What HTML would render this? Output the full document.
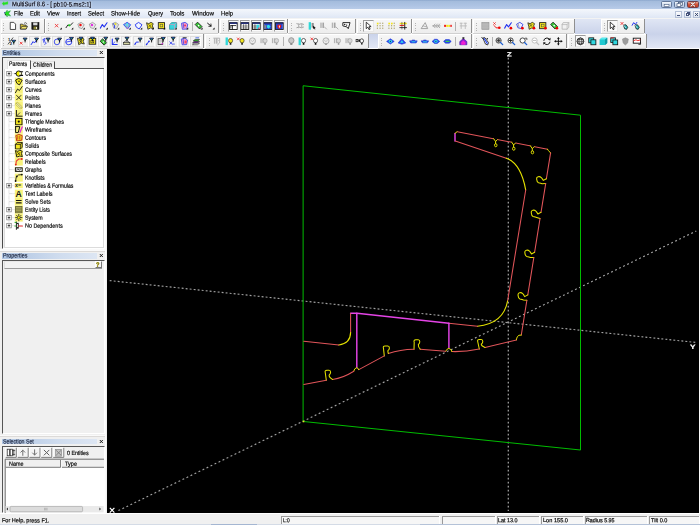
<!DOCTYPE html><html><head><meta charset="utf-8"><title>MultiSurf 8.6 - [ pb10-5.ms2:1]</title><style>
html,body{margin:0;padding:0;background:#f0f0f0;overflow:hidden}
body{width:700px;height:525px;position:relative;font-family:"Liberation Sans",sans-serif;font-size:6px;color:#000;line-height:1}
.a{position:absolute}
.t{position:absolute;white-space:nowrap;transform-origin:0 0;transform:scaleX(.87);line-height:1;-webkit-text-stroke:.75px currentColor}
#title{left:0;top:0;width:700px;height:9px;background:linear-gradient(#8aa6cc 0,#a4bcdc 14%,#adc3e3 60%,#b8cce8 100%)}
#menu{left:0;top:9px;width:700px;height:9px;background:linear-gradient(#f4f7fc,#dfe7f5)}
#rebar{left:0;top:18px;width:700px;height:31px;background:#f3f3f3}
.blu{position:absolute;background:linear-gradient(#e0e6f4,#cad3ea)}
.blu2{position:absolute;background:linear-gradient(#cad3ea,#e2e7f5)}
.tb{position:absolute;height:13px;background:linear-gradient(#f6f6f6,#ededed);border:solid #fff;border-width:1px 0 0 1px;box-shadow:1px 0 0 #8f8f8f,0 1px 0 #d0d0d0}
.grip{position:absolute;top:3px;left:2px;width:1px;height:8px;background:repeating-linear-gradient(#b4b4b4 0,#b4b4b4 1px,transparent 1px,transparent 2.5px)}
.pb{position:absolute;background:#fafafa;border:1px solid #9c9c9c;border-right-color:#e8e8e8;border-bottom-color:#e8e8e8;box-sizing:border-box}
.sep{position:absolute;width:1px;background:#b2b2b2}
#left{left:0;top:49px;width:107px;height:464px;background:#f0f0f0}
.hdr{position:absolute;left:2px;width:95px;height:5.9px;background:linear-gradient(90deg,#aec4e2,#cfdcee 60%,#dde6f3)}
.hx{position:absolute;left:99px;width:6px;height:6px}
#view{left:107px;top:48.8px;width:591.5px;height:464.3px;background:#000}
#status{left:0;top:513px;width:700px;height:12px;background:#f0f0f0;border-top:1.4px solid #fff;box-sizing:border-box}
.pane{position:absolute;height:7.6px;border-left:1px solid #9a9a9a;border-top:1px solid #9a9a9a;background:#f6f6f6;box-sizing:border-box;box-shadow:1px 0 0 #fff}
</style></head><body>
<div id="title" class="a"></div>
<div class="a" style="left:661px;top:1px;width:11px;height:7px;border-radius:1.6px;background:linear-gradient(#f2f6fb,#d3deee 50%,#bccbe2);border:.8px solid #62779a;box-sizing:border-box"></div>
<div class="a" style="left:674px;top:1px;width:11px;height:7px;border-radius:1.6px;background:linear-gradient(#f2f6fb,#d3deee 50%,#bccbe2);border:.8px solid #62779a;box-sizing:border-box"></div>
<div class="a" style="left:687px;top:1px;width:11.5px;height:7px;border-radius:1.6px;background:linear-gradient(#eaa896,#d4583e 45%,#bf3a22);border:.8px solid #70404a;box-sizing:border-box"></div>
<svg class="a" style="left:660px;top:0" width="40" height="9" viewBox="0 0 40 9"><rect x="4.2" y="4.6" width="4.8" height="1.7" fill="#fff" stroke="#4b5f80" stroke-width=".6"/><rect x="18.6" y="2.5" width="3.8" height="2.8" fill="#fff" stroke="#44587a" stroke-width=".7"/><rect x="17" y="3.7" width="3.8" height="2.8" fill="#fff" stroke="#44587a" stroke-width=".7"/><path d="M30.9,2.7L34.6,6.2M34.6,2.7L30.9,6.2" stroke="#7a2a20" stroke-width="1.9" stroke-linecap="round"/><path d="M30.9,2.7L34.6,6.2M34.6,2.7L30.9,6.2" stroke="#fff" stroke-width="1.1" stroke-linecap="round"/></svg>
<div id="menu" class="a"></div>
<div class="a" style="left:675px;top:10.5px;width:7px;height:7px;background:linear-gradient(#fdfdfe,#dfe6f2);border:.6px solid #b4c0d6;box-sizing:border-box"></div>
<div class="a" style="left:684px;top:10.5px;width:7px;height:7px;background:linear-gradient(#fdfdfe,#dfe6f2);border:.6px solid #b4c0d6;box-sizing:border-box"></div>
<div class="a" style="left:693px;top:10.5px;width:7px;height:7px;background:linear-gradient(#fdfdfe,#dfe6f2);border:.6px solid #b4c0d6;box-sizing:border-box"></div>
<div class="a" style="left:677px;top:15px;width:3px;height:1px;background:#44527a"></div>
<div class="a" style="left:686.5px;top:12.3px;width:3px;height:2.6px;border:.6px solid #44527a;box-sizing:border-box"></div>
<div class="a" style="left:685.7px;top:13.4px;width:3px;height:2.6px;border:.6px solid #44527a;background:#f4f6fa;box-sizing:border-box"></div>
<svg class="a" style="left:693px;top:10.5px" width="7" height="7"><path d="M2.1,2L5,5M5,2L2.1,5" stroke="#34436a" stroke-width=".95"/></svg>
<div id="rebar" class="a"></div>
<div class="blu" style="left:575px;top:19px;width:25.5px;height:14.5px"></div>
<div class="blu" style="left:645px;top:19px;width:55px;height:15px"></div>
<div class="blu2" style="left:369px;top:34px;width:8.5px;height:13.799999999999997px"></div>
<div class="blu2" style="left:647px;top:34px;width:53px;height:13.799999999999997px"></div>
<div class="a" style="left:0;top:47.8px;width:700px;height:1.2px;background:#fbfbfc"></div>
<div class="tb" style="left:1px;top:19px;width:41.5px"><div class="grip" style="left:0.5px"></div></div>
<div class="tb" style="left:45px;top:19px;width:172px"><div class="grip" style="left:2px"></div></div>
<div class="tb" style="left:220px;top:19px;width:66px"><div class="grip" style="left:2px"></div></div>
<div class="tb" style="left:288px;top:19px;width:66px"><div class="grip" style="left:2px"></div></div>
<div class="tb" style="left:357px;top:19px;width:53px"><div class="grip" style="left:2px"></div></div>
<div class="tb" style="left:412px;top:19px;width:58px"><div class="grip" style="left:2px"></div></div>
<div class="tb" style="left:473px;top:19px;width:100px"><div class="grip" style="left:2px"></div></div>
<div class="tb" style="left:601px;top:19px;width:42px"><div class="grip" style="left:1.5px"></div></div>
<div class="tb" style="left:1px;top:34px;width:201px"><div class="grip" style="left:0.5px"></div></div>
<div class="tb" style="left:205px;top:34px;width:162px"><div class="grip" style="left:2.5px"></div></div>
<div class="tb" style="left:378px;top:34px;width:92px"><div class="grip" style="left:2px"></div></div>
<div class="tb" style="left:473px;top:34px;width:92px"><div class="grip" style="left:2px"></div></div>
<div class="tb" style="left:568px;top:34px;width:77px"><div class="grip" style="left:1.5px"></div></div>
<div class="sep" style="left:191.5px;top:21.5px;height:9px"></div>
<div class="sep" style="left:455px;top:21.5px;height:9px"></div>
<div class="sep" style="left:283px;top:36.5px;height:9px"></div>
<div class="sep" style="left:455px;top:36.5px;height:9px"></div>
<div class="sep" style="left:492px;top:36.5px;height:9px"></div>
<div class="pb" style="left:228px;top:20px;width:10.5px;height:12px"></div>
<div class="pb" style="left:239.5px;top:20px;width:10.5px;height:12px"></div>
<div class="pb" style="left:251px;top:20px;width:10.5px;height:12px"></div>
<div class="pb" style="left:262.5px;top:20px;width:10.5px;height:12px"></div>
<div class="pb" style="left:274px;top:20px;width:10.5px;height:12px"></div>
<div class="pb" style="left:363px;top:20px;width:11px;height:12px"></div>
<div class="pb" style="left:607px;top:20px;width:11px;height:12px"></div>
<div class="pb" style="left:575px;top:35px;width:11px;height:12px"></div>
<div class="a" style="left:17.7px;top:35.5px;width:11px;height:11px;border:1px solid #dcdcdc;border-right-color:#fff;box-sizing:border-box;opacity:.9"></div>
<div class="a" style="left:29.2px;top:35.5px;width:11px;height:11px;border:1px solid #dcdcdc;border-right-color:#fff;box-sizing:border-box;opacity:.9"></div>
<div class="a" style="left:40.7px;top:35.5px;width:11px;height:11px;border:1px solid #dcdcdc;border-right-color:#fff;box-sizing:border-box;opacity:.9"></div>
<div class="a" style="left:52.2px;top:35.5px;width:11px;height:11px;border:1px solid #dcdcdc;border-right-color:#fff;box-sizing:border-box;opacity:.9"></div>
<div class="a" style="left:63.7px;top:35.5px;width:11px;height:11px;border:1px solid #dcdcdc;border-right-color:#fff;box-sizing:border-box;opacity:.9"></div>
<div class="a" style="left:75.2px;top:35.5px;width:11px;height:11px;border:1px solid #dcdcdc;border-right-color:#fff;box-sizing:border-box;opacity:.9"></div>
<div class="a" style="left:86.7px;top:35.5px;width:11px;height:11px;border:1px solid #dcdcdc;border-right-color:#fff;box-sizing:border-box;opacity:.9"></div>
<div class="a" style="left:98.2px;top:35.5px;width:11px;height:11px;border:1px solid #dcdcdc;border-right-color:#fff;box-sizing:border-box;opacity:.9"></div>
<div class="a" style="left:109.7px;top:35.5px;width:11px;height:11px;border:1px solid #dcdcdc;border-right-color:#fff;box-sizing:border-box;opacity:.9"></div>
<div class="a" style="left:121.2px;top:35.5px;width:11px;height:11px;border:1px solid #dcdcdc;border-right-color:#fff;box-sizing:border-box;opacity:.9"></div>
<div class="a" style="left:132.7px;top:35.5px;width:11px;height:11px;border:1px solid #dcdcdc;border-right-color:#fff;box-sizing:border-box;opacity:.9"></div>
<div class="a" style="left:144.2px;top:35.5px;width:11px;height:11px;border:1px solid #dcdcdc;border-right-color:#fff;box-sizing:border-box;opacity:.9"></div>
<div class="a" style="left:155.7px;top:35.5px;width:11px;height:11px;border:1px solid #dcdcdc;border-right-color:#fff;box-sizing:border-box;opacity:.9"></div>
<div class="a" style="left:167.2px;top:35.5px;width:11px;height:11px;border:1px solid #dcdcdc;border-right-color:#fff;box-sizing:border-box;opacity:.9"></div>
<div class="a" style="left:178.7px;top:35.5px;width:11px;height:11px;border:1px solid #dcdcdc;border-right-color:#fff;box-sizing:border-box;opacity:.9"></div>
<div class="a" style="left:190.2px;top:35.5px;width:11px;height:11px;border:1px solid #dcdcdc;border-right-color:#fff;box-sizing:border-box;opacity:.9"></div>
<svg class="a" style="left:0;top:0" width="700" height="50" viewBox="0 0 700 50"><g transform="translate(8.9,21.9) scale(0.89)"><polygon points="1.5,0.5 5.5,0.5 7.5,2.5 7.5,8.5 1.5,8.5" fill="#fff" stroke="#222" stroke-width="0.9" stroke-linejoin="round"/></g><g transform="translate(19.9,21.9) scale(0.89)"><polygon points="0.5,8 0.5,2.5 3,2.5 3.8,3.5 7,3.5 7,8" fill="#d8c23c" stroke="#222" stroke-width="0.8" stroke-linejoin="round"/><polygon points="0.5,8 2.2,5 8.6,5 7,8" fill="#f2e36a" stroke="#222" stroke-width="0.8" stroke-linejoin="round"/><path d="M5,1.5L6.5,0.8L7.8,2" stroke="#222" stroke-width="0.7" fill="none" stroke-linejoin="round" stroke-linecap="round"/></g><g transform="translate(31.4,21.9) scale(0.89)"><rect x="0.5" y="0.8" width="8" height="7.6" fill="#1c1c1c" stroke="#000" stroke-width="0.6"/><rect x="2" y="0.8" width="4.8" height="3" fill="#d9d9d9" stroke="none" stroke-width="0.8"/><rect x="2.4" y="5.2" width="4.2" height="3.2" fill="#8a8432" stroke="none" stroke-width="0.8"/><rect x="5.2" y="5.8" width="1" height="2" fill="#fff" stroke="none" stroke-width="0.8"/></g><g transform="translate(54.1,21.9) scale(0.89)"><path d="M0.8999999999999999,2.3000000000000003L4.699999999999999,6.1M4.699999999999999,2.3000000000000003L0.8999999999999999,6.1" stroke="#f03030" stroke-width="0.95" fill="none"/><polygon points="6.4,8.6 8.6,8.6 8.6,6.4" fill="#000" stroke="none" stroke-width="0.8" stroke-linejoin="round"/></g><g transform="translate(65.60000000000001,21.9) scale(0.89)"><path d="M0.5,6.5L2.5,3.5L5,4.2L8,1" stroke="#111" stroke-width="1" fill="none" stroke-linejoin="round" stroke-linecap="round"/><circle cx="4.2" cy="3.8" r="1.3" fill="#1fd01f"/><polygon points="6.4,8.6 8.6,8.6 8.6,6.4" fill="#000" stroke="none" stroke-width="0.8" stroke-linejoin="round"/></g><g transform="translate(77.10000000000001,21.9) scale(0.89)"><polygon points="0.8,2.5 4.5,0.5 8,3 5.5,7.5 2.2,6.5" fill="#e9e9e9" stroke="#8d8d8d" stroke-width="0.8" stroke-linejoin="round"/><circle cx="3.8" cy="3.6" r="1.4" fill="#f01010"/><polygon points="6.4,8.6 8.6,8.6 8.6,6.4" fill="#000" stroke="none" stroke-width="0.8" stroke-linejoin="round"/></g><g transform="translate(88.60000000000001,21.9) scale(0.89)"><polygon points="0.8,2.5 4.5,0.5 8,3 5.5,7.5 2.2,6.5" fill="#e9e9e9" stroke="#8d8d8d" stroke-width="0.8" stroke-linejoin="round"/><circle cx="3.8" cy="3.6" r="1.4" fill="#e030e0"/><polygon points="6.4,8.6 8.6,8.6 8.6,6.4" fill="#000" stroke="none" stroke-width="0.8" stroke-linejoin="round"/></g><g transform="translate(100.10000000000001,21.9) scale(0.89)"><path d="M0.3,7L2.5,3L4.6,5.6L7.8,1" stroke="#2030f0" stroke-width="1.2" fill="none" stroke-linejoin="round" stroke-linecap="round"/><polygon points="6.4,8.6 8.6,8.6 8.6,6.4" fill="#000" stroke="none" stroke-width="0.8" stroke-linejoin="round"/></g><g transform="translate(111.60000000000001,21.9) scale(0.89)"><polygon points="0.8,2 4.5,0.5 8,3 5.5,7.5 2.2,6.5" fill="#dedede" stroke="#8d8d8d" stroke-width="0.8" stroke-linejoin="round"/><path d="M2,2L3.5,4.5L3,7" stroke="#2030f0" stroke-width="1" fill="none" stroke-linejoin="round" stroke-linecap="round"/><circle cx="4.3" cy="2.4" r="1.2" fill="#e8e020"/><polygon points="6.4,8.6 8.6,8.6 8.6,6.4" fill="#000" stroke="none" stroke-width="0.8" stroke-linejoin="round"/></g><g transform="translate(123.10000000000001,21.9) scale(0.89)"><polygon points="0.5,3 4.5,0.5 8.5,3.2 5,8" fill="#58e6f0" stroke="#2030f0" stroke-width="0.9" stroke-linejoin="round"/><path d="M2.5,1.8L5,8L6.5,1.9" stroke="#f060a0" stroke-width="0.6" fill="none" stroke-linejoin="round" stroke-linecap="round"/><polygon points="6.4,8.6 8.6,8.6 8.6,6.4" fill="#000" stroke="none" stroke-width="0.8" stroke-linejoin="round"/></g><g transform="translate(134.6,21.9) scale(0.89)"><polygon points="0.8,3 4.5,0.6 8.3,3.2 5.2,8 1.8,5.8" fill="#f2f6ff" stroke="#2030f0" stroke-width="1" stroke-linejoin="round"/><polygon points="6.4,8.6 8.6,8.6 8.6,6.4" fill="#000" stroke="none" stroke-width="0.8" stroke-linejoin="round"/></g><g transform="translate(146.1,21.9) scale(0.89)"><polygon points="0.5,1 3,2 5.5,0.5 8,2 7,4.5 8.3,7.5 5,6.8 2,8.3 1.5,5" fill="#f4e61e" stroke="#222" stroke-width="0.9" stroke-linejoin="round"/><path d="M2.6999999999999997,2.6999999999999997L5.9,5.9M5.9,2.6999999999999997L2.6999999999999997,5.9" stroke="#222" stroke-width="0.7" fill="none"/><polygon points="6.4,8.6 8.6,8.6 8.6,6.4" fill="#000" stroke="none" stroke-width="0.8" stroke-linejoin="round"/></g><g transform="translate(157.6,21.9) scale(0.89)"><rect x="0.8" y="0.8" width="7" height="6.8" fill="#f4e61e" stroke="#222" stroke-width="1"/><rect x="2.8" y="2.6" width="3" height="3" fill="#f4e61e" stroke="#444" stroke-width="0.6"/><polygon points="6.4,8.6 8.6,8.6 8.6,6.4" fill="#000" stroke="none" stroke-width="0.8" stroke-linejoin="round"/></g><g transform="translate(169.1,21.9) scale(0.89)"><polygon points="0.5,3 3,0.8 8.5,0.8 8.5,6 6,8.3 0.5,8.3" fill="#38d6dc" stroke="#187c86" stroke-width="0.7" stroke-linejoin="round"/><path d="M0.5,3L6,3L8.5,0.8" stroke="#f090b0" stroke-width="0.7" fill="none" stroke-linejoin="round" stroke-linecap="round"/><path d="M6,3L6,8.3" stroke="#f090b0" stroke-width="0.7" fill="none" stroke-linejoin="round" stroke-linecap="round"/><polygon points="6.4,8.6 8.6,8.6 8.6,6.4" fill="#000" stroke="none" stroke-width="0.8" stroke-linejoin="round"/></g><g transform="translate(180.6,21.9) scale(0.89)"><polygon points="1,1.5 5,0.5 8,2.5 7,8 2,8.3" fill="#f6a0c8" stroke="#3040f0" stroke-width="0.9" stroke-linejoin="round"/><path d="M3,2L3.6,6.5" stroke="#3040f0" stroke-width="0.8" fill="none" stroke-linejoin="round" stroke-linecap="round"/><circle cx="5" cy="4" r="1.1" fill="#f03060"/><polygon points="6.4,8.6 8.6,8.6 8.6,6.4" fill="#000" stroke="none" stroke-width="0.8" stroke-linejoin="round"/></g><g transform="translate(194.9,21.9) scale(0.89)"><polygon points="0.3,3 3,0.3 8,5.3 5.3,8" fill="#38c838" stroke="#111" stroke-width="0.9" stroke-linejoin="round"/><circle cx="4.2" cy="4.2" r="0.9" fill="#fff"/><polygon points="6.4,8.6 8.6,8.6 8.6,6.4" fill="#000" stroke="none" stroke-width="0.8" stroke-linejoin="round"/></g><g transform="translate(206.9,21.9) scale(0.89)"><path d="M0.8,1.5L4.5,4.6" stroke="#111" stroke-width="1.1" fill="none" stroke-linejoin="round" stroke-linecap="round"/><path d="M2.2,5L4.8,4.9L4.5,2.3" stroke="#111" stroke-width="0.9" fill="none" stroke-linejoin="round" stroke-linecap="round"/><polygon points="6.4,8.6 8.6,8.6 8.6,6.4" fill="#000" stroke="none" stroke-width="0.8" stroke-linejoin="round"/></g><g transform="translate(229.1,22.0) scale(0.89)"><rect x="0.5" y="0.8" width="8.6" height="7.6" fill="#fff" stroke="#111" stroke-width="1"/><path d="M2,4L7.5,4" stroke="#111" stroke-width="0.9" fill="none" stroke-linejoin="round" stroke-linecap="round"/><path d="M3.8,4L3.8,8" stroke="#111" stroke-width="0.9" fill="none" stroke-linejoin="round" stroke-linecap="round"/><path d="M2,4L2,7" stroke="#111" stroke-width="0.9" fill="none" stroke-linejoin="round" stroke-linecap="round"/><rect x="0.5" y="0.6" width="8.6" height="1.5" fill="#101c70" stroke="none" stroke-width="0.8"/></g><g transform="translate(240.6,22.0) scale(0.89)"><rect x="0.5" y="0.8" width="8.6" height="7.6" fill="#fff" stroke="#111" stroke-width="1"/><rect x="1.2" y="3.2" width="7.2" height="4.6" fill="#cfcfcf" stroke="none" stroke-width="0.8"/><path d="M3.4,3L3.4,8" stroke="#111" stroke-width="0.7" fill="none" stroke-linejoin="round" stroke-linecap="round"/><path d="M6,3L6,8" stroke="#111" stroke-width="0.7" fill="none" stroke-linejoin="round" stroke-linecap="round"/><rect x="0.5" y="0.6" width="8.6" height="1.5" fill="#101c70" stroke="none" stroke-width="0.8"/></g><g transform="translate(252.1,22.0) scale(0.89)"><rect x="0.5" y="0.8" width="8.6" height="7.6" fill="#fff" stroke="#111" stroke-width="1"/><rect x="1.2" y="3.2" width="7.2" height="4.6" fill="#b9b9b9" stroke="none" stroke-width="0.8"/><rect x="5" y="3" width="3" height="5" fill="#30d8e8" stroke="none" stroke-width="0.8"/><path d="M3.2,3L3.2,8" stroke="#111" stroke-width="0.7" fill="none" stroke-linejoin="round" stroke-linecap="round"/><circle cx="7.6" cy="7.2" r="0.9" fill="#f03060"/><rect x="0.5" y="0.6" width="8.6" height="1.5" fill="#101c70" stroke="none" stroke-width="0.8"/></g><g transform="translate(263.59999999999997,22.0) scale(0.89)"><rect x="0.5" y="0.8" width="8.6" height="7.6" fill="#fff" stroke="#111" stroke-width="1"/><rect x="1" y="2" width="7.6" height="6" fill="#2444d0" stroke="none" stroke-width="0.8"/><polygon points="3.5,4 6,3 7.8,5 6,7.5 4,6.5" fill="#30e0e8" stroke="none" stroke-width="0.8" stroke-linejoin="round"/><rect x="1.2" y="3.5" width="1.8" height="4" fill="#8a8a8a" stroke="none" stroke-width="0.8"/><rect x="0.5" y="0.6" width="8.6" height="1.5" fill="#101c70" stroke="none" stroke-width="0.8"/></g><g transform="translate(275.09999999999997,22.0) scale(0.89)"><rect x="0.5" y="0.8" width="8.6" height="7.6" fill="#fff" stroke="#111" stroke-width="1"/><rect x="1" y="2" width="7.6" height="6" fill="#2444d0" stroke="none" stroke-width="0.8"/><polygon points="2.5,3.5 4.8,2.9 7,3.5 6.4,6.5 4.8,7.8 3,6.5" fill="#f01818" stroke="none" stroke-width="0.8" stroke-linejoin="round"/><rect x="4.3" y="4" width="1" height="2.4" fill="#fff" stroke="none" stroke-width="0.8"/><rect x="0.5" y="0.6" width="8.6" height="1.5" fill="#101c70" stroke="none" stroke-width="0.8"/></g><g transform="translate(296.4,21.9) scale(0.89)"><path d="M0.5,2L3,2.8L5.5,2L8,2.8" stroke="#9a9a9a" stroke-width="1" fill="none" stroke-linejoin="round" stroke-linecap="round"/><path d="M0.5,6.5L3,5.8L5.5,6.5L8,5.8" stroke="#9a9a9a" stroke-width="1" fill="none" stroke-linejoin="round" stroke-linecap="round"/><path d="M2.5,2L2.5,6.5M6,2L6,6.5" stroke="#b5b5b5" stroke-width="1.2" fill="none" stroke-linejoin="round" stroke-linecap="round"/></g><g transform="translate(308.4,21.9) scale(0.89)"><rect x="0.3" y="0.3" width="2.6" height="8.4" fill="#30d8d8" stroke="none" stroke-width="0.8"/><rect x="3.6" y="1.2" width="2.4" height="5.2" fill="#8c8c8c" stroke="none" stroke-width="0.8"/><polygon points="5.2,4.2 5.2,8 6.3,7 7.2,8.6 7.9,8.2 7.1,6.7 8.4,6.5" fill="#111" stroke="none" stroke-width="0.8" stroke-linejoin="round"/></g><g transform="translate(319.4,21.9) scale(0.89)"><rect x="1" y="0.8" width="1.6" height="6" fill="#b4b4b4" stroke="none" stroke-width="0.8"/><rect x="3.4" y="0.8" width="1.8" height="6" fill="#a4a4a4" stroke="none" stroke-width="0.8"/><path d="M5.5,5.5L8,8" stroke="#b0b0b0" stroke-width="1.1" fill="none" stroke-linejoin="round" stroke-linecap="round"/></g><g transform="translate(330.9,21.9) scale(0.89)"><rect x="1" y="0.8" width="1.6" height="6" fill="#b4b4b4" stroke="none" stroke-width="0.8"/><rect x="3.4" y="0.8" width="1.8" height="6" fill="#a4a4a4" stroke="none" stroke-width="0.8"/><path d="M5.5,5.5L8,8" stroke="#b0b0b0" stroke-width="1.1" fill="none" stroke-linejoin="round" stroke-linecap="round"/></g><g transform="translate(342.4,21.9) scale(0.89)"><polygon points="0.5,0.8 8.6,0.8 6.6,7.6 5,5.6 0.5,4.5" fill="#fff" stroke="#111" stroke-width="1" stroke-linejoin="round"/><circle cx="2.6" cy="3" r="0.8" fill="#111"/><circle cx="4.8" cy="3.6" r="0.8" fill="#111"/></g><g transform="translate(364.9,21.9) scale(0.89)"><polygon points="1.5,0.3 1.5,7.6 3.3,5.9 4.6,8.7 5.9,8.1 4.6,5.4 7,5.3" fill="#fff" stroke="#111" stroke-width="0.9" stroke-linejoin="round"/></g><g transform="translate(376.4,21.9) scale(0.89)"><rect x="0.5" y="0.9" width="1.9" height="1.9" fill="#f4e61e" stroke="none" stroke-width="0.8"/><rect x="3.5" y="0.9" width="1.25" height="1.25" fill="#a39a5c" stroke="none" stroke-width="0.8"/><rect x="6.5" y="0.9" width="1.25" height="1.25" fill="#a39a5c" stroke="none" stroke-width="0.8"/><rect x="0.5" y="3.6999999999999997" width="1.25" height="1.25" fill="#a39a5c" stroke="none" stroke-width="0.8"/><rect x="3.5" y="3.6999999999999997" width="1.25" height="1.25" fill="#a39a5c" stroke="none" stroke-width="0.8"/><rect x="6.5" y="3.6999999999999997" width="1.25" height="1.25" fill="#a39a5c" stroke="none" stroke-width="0.8"/><rect x="0.5" y="6.5" width="1.25" height="1.25" fill="#a39a5c" stroke="none" stroke-width="0.8"/><rect x="3.5" y="6.5" width="1.25" height="1.25" fill="#a39a5c" stroke="none" stroke-width="0.8"/><rect x="6.5" y="6.5" width="1.25" height="1.25" fill="#a39a5c" stroke="none" stroke-width="0.8"/></g><g transform="translate(387.9,21.9) scale(0.89)"><rect x="0.5" y="0.9" width="1.9" height="1.9" fill="#f4e61e" stroke="none" stroke-width="0.8"/><rect x="3.5" y="0.9" width="1.9" height="1.9" fill="#f4e61e" stroke="none" stroke-width="0.8"/><rect x="6.5" y="0.9" width="1.25" height="1.25" fill="#a39a5c" stroke="none" stroke-width="0.8"/><rect x="0.5" y="3.6999999999999997" width="1.25" height="1.25" fill="#a39a5c" stroke="none" stroke-width="0.8"/><rect x="3.5" y="3.6999999999999997" width="1.25" height="1.25" fill="#a39a5c" stroke="none" stroke-width="0.8"/><rect x="6.5" y="3.6999999999999997" width="1.25" height="1.25" fill="#a39a5c" stroke="none" stroke-width="0.8"/><rect x="0.5" y="6.5" width="1.25" height="1.25" fill="#a39a5c" stroke="none" stroke-width="0.8"/><rect x="3.5" y="6.5" width="1.25" height="1.25" fill="#a39a5c" stroke="none" stroke-width="0.8"/><rect x="6.5" y="6.5" width="1.25" height="1.25" fill="#a39a5c" stroke="none" stroke-width="0.8"/></g><g transform="translate(399.4,21.9) scale(0.89)"><rect x="0.3" y="1" width="8" height="1.6" fill="#f4e61e" stroke="none" stroke-width="0.8"/><rect x="0.3" y="3.4" width="5" height="1.2" fill="#f02020" stroke="none" stroke-width="0.8"/><path d="M6,0.5L6,8.2" stroke="#111" stroke-width="1" fill="none" stroke-linejoin="round" stroke-linecap="round"/><path d="M2.8,0.5L2.8,8" stroke="#444" stroke-width="0.7" fill="none" stroke-linejoin="round" stroke-linecap="round"/><path d="M0.5,6.4L8,6.4" stroke="#111" stroke-width="0.9" fill="none" stroke-linejoin="round" stroke-linecap="round"/></g><g transform="translate(420.4,21.9) scale(0.89)"><polygon points="0.8,7.5 5.4,0.8 8.2,7.5" fill="none" stroke="#9a9a9a" stroke-width="1" stroke-linejoin="round"/><path d="M3,4.5L7,5.6" stroke="#9a9a9a" stroke-width="0.8" fill="none" stroke-linejoin="round" stroke-linecap="round"/></g><g transform="translate(432.4,21.9) scale(0.89)"><path d="M0.3,4.5L8.6,4.5" stroke="#9a9a9a" stroke-width="1" fill="none" stroke-linejoin="round" stroke-linecap="round"/><path d="M3,2.4L1,4.5L3,6.6" stroke="#9a9a9a" stroke-width="0.9" fill="none" stroke-linejoin="round" stroke-linecap="round"/><path d="M5.6,2.4L3.6,4.5L5.6,6.6" stroke="#9a9a9a" stroke-width="0.9" fill="none" stroke-linejoin="round" stroke-linecap="round"/><path d="M8.2,2.4L6.2,4.5L8.2,6.6" stroke="#9a9a9a" stroke-width="0.9" fill="none" stroke-linejoin="round" stroke-linecap="round"/></g><g transform="translate(443.9,21.9) scale(0.89)"><rect x="0.2" y="3.3" width="2.2" height="2.3" fill="#f02020" stroke="none" stroke-width="0.8"/><rect x="2.6" y="3.3" width="2.2" height="2.3" fill="#f4e61e" stroke="none" stroke-width="0.8"/><rect x="5" y="3.3" width="2" height="2.3" fill="#f4e61e" stroke="none" stroke-width="0.8"/><rect x="7.2" y="3.3" width="1.7" height="2.3" fill="#f02020" stroke="none" stroke-width="0.8"/></g><g transform="translate(459.4,21.9) scale(0.89)"><path d="M0.8,1.5L3.2,1.5M5.2,1.5L8,1.5M2,1.5L2,7.5M6.6,1.5L6.6,7.5M0.8,4.5L8,4.5" stroke="#b9b9b9" stroke-width="1" fill="none" stroke-linejoin="round" stroke-linecap="round"/></g><g transform="translate(481.4,21.9) scale(0.89)"><rect x="0.5" y="0.6" width="8" height="7.8" fill="#b2b2b2" stroke="#8c8c8c" stroke-width="0.6"/><path d="M0.5,2.6L8.5,2.6M0.5,4.6L8.5,4.6M0.5,6.6L8.5,6.6" stroke="#c8c8c8" stroke-width="0.5" fill="none" stroke-linejoin="round" stroke-linecap="round"/></g><g transform="translate(492.9,21.9) scale(0.89)"><path d="M0.5,0.5L3.1,3.1M3.1,0.5L0.5,3.1" stroke="#f02020" stroke-width="0.9" fill="none"/><path d="M1.5,4.2L3.5,6.6L6,6.8" stroke="#f02020" stroke-width="1.1" fill="none" stroke-linejoin="round" stroke-linecap="round"/><circle cx="7.2" cy="6.6" r="1.5" fill="#f00000"/></g><g transform="translate(504.4,21.9) scale(0.89)"><path d="M0.3,7L2.5,3L4.6,5.6L7.8,1" stroke="#2030f0" stroke-width="1.2" fill="none" stroke-linejoin="round" stroke-linecap="round"/><circle cx="7.3" cy="7.0" r="1.5" fill="#f00000"/></g><g transform="translate(515.9,21.9) scale(0.89)"><polygon points="0.8,2.5 4.5,0.5 8,3 5.5,7.5 2.2,6.5" fill="#eef" stroke="#2838e8" stroke-width="0.9" stroke-linejoin="round"/><path d="M2.5,2L3.5,6" stroke="#888" stroke-width="0.8" fill="none" stroke-linejoin="round" stroke-linecap="round"/><circle cx="7.3" cy="7.0" r="1.5" fill="#f00000"/></g><g transform="translate(527.4,21.9) scale(0.89)"><polygon points="0.5,1 3,2 5.5,0.5 8,2 7,4.5 8.3,7.5 5,6.8 2,8.3 1.5,5" fill="#f4e61e" stroke="#222" stroke-width="0.9" stroke-linejoin="round"/><path d="M2.5,2.5L5.5,5.5M5.5,2.5L2.5,5.5" stroke="#222" stroke-width="0.7" fill="none"/><circle cx="7.3" cy="7.0" r="1.5" fill="#f00000"/></g><g transform="translate(538.9,21.9) scale(0.89)"><rect x="0.8" y="0.8" width="7" height="6.8" fill="#f4e61e" stroke="#222" stroke-width="1"/><rect x="2.8" y="2.6" width="3" height="3" fill="#f4e61e" stroke="#444" stroke-width="0.6"/><circle cx="7.3" cy="7.0" r="1.5" fill="#f00000"/></g><g transform="translate(550.4,21.9) scale(0.89)"><polygon points="0.3,3 3,0.3 8,5.3 5.3,8" fill="#38c838" stroke="#111" stroke-width="0.9" stroke-linejoin="round"/><circle cx="4.2" cy="4.2" r="0.9" fill="#fff"/><circle cx="7.3" cy="7.0" r="1.5" fill="#f00000"/></g><g transform="translate(561.4,21.9) scale(0.89)"><polygon points="2,0.8 8.3,0.8 8.3,6 6.4,8.2 0.8,8.2 0.8,3" fill="none" stroke="#b2b2b2" stroke-width="0.9" stroke-linejoin="round"/><path d="M0.8,3L6.4,3L8.3,0.8M6.4,3L6.4,8.2" stroke="#b2b2b2" stroke-width="0.8" fill="none" stroke-linejoin="round" stroke-linecap="round"/></g><g transform="translate(608.9,21.9) scale(0.89)"><polygon points="1.5,0.3 1.5,7.6 3.3,5.9 4.6,8.7 5.9,8.1 4.6,5.4 7,5.3" fill="#fff" stroke="#111" stroke-width="0.9" stroke-linejoin="round"/></g><g transform="translate(620.4,21.9) scale(0.89)"><path d="M0.19999999999999996,0.19999999999999996L3.4000000000000004,3.4000000000000004M3.4000000000000004,0.19999999999999996L0.19999999999999996,3.4000000000000004" stroke="#f02020" stroke-width="0.9" fill="none"/><polygon points="3.4,3.6 6.2,3.2 8.3,6 7,8.4 4.8,7.8" fill="#24b0b8" stroke="#111" stroke-width="0.8" stroke-linejoin="round"/><path d="M3.2,3.2L6,6.5" stroke="#fff" stroke-width="0.7" fill="none" stroke-linejoin="round" stroke-linecap="round"/></g><g transform="translate(631.9,21.9) scale(0.89)"><path d="M0.3,3.8L2,0.8L3.8,3L5.5,0.6" stroke="#2030f0" stroke-width="1.1" fill="none" stroke-linejoin="round" stroke-linecap="round"/><polygon points="3.4,3.6 6.2,3.2 8.3,6 7,8.4 4.8,7.8" fill="#24b0b8" stroke="#111" stroke-width="0.8" stroke-linejoin="round"/><path d="M3.2,3.2L6,6.5" stroke="#fff" stroke-width="0.7" fill="none" stroke-linejoin="round" stroke-linecap="round"/></g><g transform="translate(7.9,37.3) scale(0.89)"><text x="0" y="4.2" font-size="4.6" font-family="Liberation Sans, sans-serif" font-weight="bold" fill="#111">1</text><text x="2.2" y="8.6" font-size="4.6" font-family="Liberation Sans, sans-serif" font-weight="bold" fill="#111">2</text><path d="M0.3,7.6L5.6,0.6" stroke="#111" stroke-width="0.8" fill="none" stroke-linejoin="round" stroke-linecap="round"/><polygon points="4.4,3.4 8.8,3.4 6.6000000000000005,6.3" fill="#12808c" stroke="#111" stroke-width="0.95" stroke-linejoin="round"/><path d="M5.6000000000000005,3.5L7.6000000000000005,3.5" stroke="#2850e0" stroke-width="0.6" fill="none" stroke-linejoin="round" stroke-linecap="round"/><path d="M6.6000000000000005,6.1L6.6000000000000005,7.699999999999999" stroke="#111" stroke-width="1.05" fill="none" stroke-linejoin="round" stroke-linecap="round"/></g><g transform="translate(19.4,37.3) scale(0.89)"><path d="M0.5,5.1L3.5,8.1M3.5,5.1L0.5,8.1" stroke="#f02020" stroke-width="0.9" fill="none"/><polygon points="4.2,1.0 8.600000000000001,1.0 6.4,3.9" fill="#12808c" stroke="#111" stroke-width="0.95" stroke-linejoin="round"/><path d="M5.4,1.1L7.4,1.1" stroke="#2850e0" stroke-width="0.6" fill="none" stroke-linejoin="round" stroke-linecap="round"/><path d="M6.4,3.7L6.4,5.3" stroke="#111" stroke-width="1.05" fill="none" stroke-linejoin="round" stroke-linecap="round"/></g><g transform="translate(30.9,37.3) scale(0.89)"><path d="M0.3,8.2L2.4,4.8L4,6.4L6,3.4" stroke="#2030f0" stroke-width="1.1" fill="none" stroke-linejoin="round" stroke-linecap="round"/><polygon points="4.2,1.0 8.600000000000001,1.0 6.4,3.9" fill="#12808c" stroke="#111" stroke-width="0.95" stroke-linejoin="round"/><path d="M5.4,1.1L7.4,1.1" stroke="#2850e0" stroke-width="0.6" fill="none" stroke-linejoin="round" stroke-linecap="round"/><path d="M6.4,3.7L6.4,5.3" stroke="#111" stroke-width="1.05" fill="none" stroke-linejoin="round" stroke-linecap="round"/></g><g transform="translate(42.4,37.3) scale(0.89)"><path d="M0.8,2.5L3,1.2L2.2,4.4L4.4,6.4L2.6,8.2" stroke="#2030f0" stroke-width="0.9" fill="none" stroke-linejoin="round" stroke-linecap="round"/><path d="M0.8,2.5L1.8,6.2" stroke="#2030f0" stroke-width="0.8" fill="none" stroke-linejoin="round" stroke-linecap="round"/><polygon points="4.2,1.0 8.600000000000001,1.0 6.4,3.9" fill="#12808c" stroke="#111" stroke-width="0.95" stroke-linejoin="round"/><path d="M5.4,1.1L7.4,1.1" stroke="#2850e0" stroke-width="0.6" fill="none" stroke-linejoin="round" stroke-linecap="round"/><path d="M6.4,3.7L6.4,5.3" stroke="#111" stroke-width="1.05" fill="none" stroke-linejoin="round" stroke-linecap="round"/></g><g transform="translate(53.9,37.3) scale(0.89)"><ellipse cx="3.4" cy="5.2" rx="3" ry="3.2" fill="#f4f4d8" stroke="#2030f0" stroke-width=".9"/><polygon points="4.2,1.0 8.600000000000001,1.0 6.4,3.9" fill="#12808c" stroke="#111" stroke-width="0.95" stroke-linejoin="round"/><path d="M5.4,1.1L7.4,1.1" stroke="#2850e0" stroke-width="0.6" fill="none" stroke-linejoin="round" stroke-linecap="round"/><path d="M6.4,3.7L6.4,5.3" stroke="#111" stroke-width="1.05" fill="none" stroke-linejoin="round" stroke-linecap="round"/></g><g transform="translate(65.4,37.3) scale(0.89)"><ellipse cx="3.8" cy="5.2" rx="3.4" ry="3.2" fill="none" stroke="#2030f0" stroke-width="1"/><path d="M0.8,5.4L6.6,4.2" stroke="#2030f0" stroke-width="0.9" fill="none" stroke-linejoin="round" stroke-linecap="round"/><polygon points="4.6,0.2 9.0,0.2 6.8,3.1" fill="#12808c" stroke="#111" stroke-width="0.95" stroke-linejoin="round"/><path d="M5.8,0.30000000000000004L7.8,0.30000000000000004" stroke="#2850e0" stroke-width="0.6" fill="none" stroke-linejoin="round" stroke-linecap="round"/><path d="M6.8,2.9000000000000004L6.8,4.5" stroke="#111" stroke-width="1.05" fill="none" stroke-linejoin="round" stroke-linecap="round"/></g><g transform="translate(76.9,37.3) scale(0.89)"><polygon points="0.5,1 3,2 5.5,0.5 8,2 7,4.5 8.3,7.5 5,6.8 2,8.3 1.5,5" fill="#f4e61e" stroke="#222" stroke-width="0.9" stroke-linejoin="round"/><path d="M2.6999999999999997,3.4L5.9,6.6M5.9,3.4L2.6999999999999997,6.6" stroke="#222" stroke-width="0.8" fill="none"/><polygon points="2.4,0 6.800000000000001,0 4.6,2.9" fill="#12808c" stroke="#111" stroke-width="0.95" stroke-linejoin="round"/><path d="M3.5999999999999996,0.1L5.6,0.1" stroke="#2850e0" stroke-width="0.6" fill="none" stroke-linejoin="round" stroke-linecap="round"/><path d="M4.6,2.7L4.6,4.3" stroke="#111" stroke-width="1.05" fill="none" stroke-linejoin="round" stroke-linecap="round"/></g><g transform="translate(88.4,37.3) scale(0.89)"><rect x="0.8" y="1.2" width="7.4" height="6.6" fill="#f4e61e" stroke="#222" stroke-width="1"/><rect x="2.8" y="3.6" width="3.2" height="2.6" fill="#f4e61e" stroke="#222" stroke-width="0.7"/><polygon points="2.4,0 6.800000000000001,0 4.6,2.9" fill="#12808c" stroke="#111" stroke-width="0.95" stroke-linejoin="round"/><path d="M3.5999999999999996,0.1L5.6,0.1" stroke="#2850e0" stroke-width="0.6" fill="none" stroke-linejoin="round" stroke-linecap="round"/><path d="M4.6,2.7L4.6,4.3" stroke="#111" stroke-width="1.05" fill="none" stroke-linejoin="round" stroke-linecap="round"/></g><g transform="translate(99.9,37.3) scale(0.89)"><polygon points="0.3,4.4 3,1.7 7.4,6.1 4.7,8.8" fill="#38c838" stroke="#111" stroke-width="0.9" stroke-linejoin="round"/><circle cx="3.8" cy="5.2" r="0.8" fill="#fff"/><polygon points="4.4,0 8.8,0 6.6000000000000005,2.9" fill="#12808c" stroke="#111" stroke-width="0.95" stroke-linejoin="round"/><path d="M5.6000000000000005,0.1L7.6000000000000005,0.1" stroke="#2850e0" stroke-width="0.6" fill="none" stroke-linejoin="round" stroke-linecap="round"/><path d="M6.6000000000000005,2.7L6.6000000000000005,4.3" stroke="#111" stroke-width="1.05" fill="none" stroke-linejoin="round" stroke-linecap="round"/></g><g transform="translate(111.4,37.3) scale(0.89)"><path d="M1,2L1,8L6.5,8" stroke="#2030f0" stroke-width="1.2" fill="none" stroke-linejoin="round" stroke-linecap="round"/><path d="M1,8L4,5" stroke="#2030f0" stroke-width="0.8" fill="none" stroke-linejoin="round" stroke-linecap="round"/><polygon points="4.2,1.0 8.600000000000001,1.0 6.4,3.9" fill="#12808c" stroke="#111" stroke-width="0.95" stroke-linejoin="round"/><path d="M5.4,1.1L7.4,1.1" stroke="#2850e0" stroke-width="0.6" fill="none" stroke-linejoin="round" stroke-linecap="round"/><path d="M6.4,3.7L6.4,5.3" stroke="#111" stroke-width="1.05" fill="none" stroke-linejoin="round" stroke-linecap="round"/></g><g transform="translate(122.9,37.3) scale(0.89)"><rect x="0.6" y="5.6" width="7.2" height="2.6" fill="#d4d4a0" stroke="#222" stroke-width="0.7"/><path d="M1.6,5.6L2.6,4L5.6,4L6.6,5.6" stroke="#222" stroke-width="0.7" fill="none" stroke-linejoin="round" stroke-linecap="round"/><polygon points="2.4,0 6.800000000000001,0 4.6,2.9" fill="#12808c" stroke="#111" stroke-width="0.95" stroke-linejoin="round"/><path d="M3.5999999999999996,0.1L5.6,0.1" stroke="#2850e0" stroke-width="0.6" fill="none" stroke-linejoin="round" stroke-linecap="round"/><path d="M4.6,2.7L4.6,4.3" stroke="#111" stroke-width="1.05" fill="none" stroke-linejoin="round" stroke-linecap="round"/></g><g transform="translate(134.4,37.3) scale(0.89)"><path d="M0.4,8L2,5.4L4.4,5.4" stroke="#2030f0" stroke-width="1.1" fill="none" stroke-linejoin="round" stroke-linecap="round"/><circle cx="1.2" cy="7.2" r="0.8" fill="#2030f0"/><polygon points="4.2,1.0 8.600000000000001,1.0 6.4,3.9" fill="#12808c" stroke="#111" stroke-width="0.95" stroke-linejoin="round"/><path d="M5.4,1.1L7.4,1.1" stroke="#2850e0" stroke-width="0.6" fill="none" stroke-linejoin="round" stroke-linecap="round"/><path d="M6.4,3.7L6.4,5.3" stroke="#111" stroke-width="1.05" fill="none" stroke-linejoin="round" stroke-linecap="round"/></g><g transform="translate(145.9,37.3) scale(0.89)"><path d="M0.4,8.4L3.6,4.4" stroke="#2030f0" stroke-width="1.1" fill="none" stroke-linejoin="round" stroke-linecap="round"/><circle cx="0.8" cy="8" r="0.9" fill="#2030f0"/><circle cx="3.4" cy="4.6" r="0.9" fill="#2030f0"/><polygon points="4.2,1.0 8.600000000000001,1.0 6.4,3.9" fill="#12808c" stroke="#111" stroke-width="0.95" stroke-linejoin="round"/><path d="M5.4,1.1L7.4,1.1" stroke="#2850e0" stroke-width="0.6" fill="none" stroke-linejoin="round" stroke-linecap="round"/><path d="M6.4,3.7L6.4,5.3" stroke="#111" stroke-width="1.05" fill="none" stroke-linejoin="round" stroke-linecap="round"/></g><g transform="translate(157.4,37.3) scale(0.89)"><rect x="0.8" y="1.6" width="5.2" height="6.6" fill="#fff" stroke="#222" stroke-width="0.9"/><path d="M2,3.4L4.8,3.4M2,5L4.8,5M2,6.6L4,6.6" stroke="#888" stroke-width="0.6" fill="none" stroke-linejoin="round" stroke-linecap="round"/><polygon points="4.4,0.2 8.8,0.2 6.6000000000000005,3.1" fill="#12808c" stroke="#111" stroke-width="0.95" stroke-linejoin="round"/><path d="M5.6000000000000005,0.30000000000000004L7.6000000000000005,0.30000000000000004" stroke="#2850e0" stroke-width="0.6" fill="none" stroke-linejoin="round" stroke-linecap="round"/><path d="M6.6000000000000005,2.9000000000000004L6.6000000000000005,4.5" stroke="#111" stroke-width="1.05" fill="none" stroke-linejoin="round" stroke-linecap="round"/><circle cx="5.4" cy="7.2" r="0.9" fill="#e030e0"/></g><g transform="translate(168.9,37.3) scale(0.89)"><path d="M0.6000000000000001,4.800000000000001L3.8000000000000003,8.0M3.8000000000000003,4.800000000000001L0.6000000000000001,8.0" stroke="#2030f0" stroke-width="0.9" fill="none"/><path d="M4,7.6L6.2,7.6" stroke="#2030f0" stroke-width="0.8" fill="none" stroke-linejoin="round" stroke-linecap="round"/><polygon points="2.6,0 7.0,0 4.800000000000001,2.9" fill="#12808c" stroke="#111" stroke-width="0.95" stroke-linejoin="round"/><path d="M3.8,0.1L5.800000000000001,0.1" stroke="#2850e0" stroke-width="0.6" fill="none" stroke-linejoin="round" stroke-linecap="round"/><path d="M4.800000000000001,2.7L4.800000000000001,4.3" stroke="#111" stroke-width="1.05" fill="none" stroke-linejoin="round" stroke-linecap="round"/></g><g transform="translate(180.4,37.3) scale(0.89)"><polygon points="1,2 5,1 8,3 7,8.2 2,8.4" fill="#f6a0c8" stroke="#3040f0" stroke-width="0.9" stroke-linejoin="round"/><path d="M3,2.4L3.6,7" stroke="#2030f0" stroke-width="0.8" fill="none" stroke-linejoin="round" stroke-linecap="round"/><rect x="4.6" y="3.6" width="2.4" height="3.2" fill="#f04868" stroke="none" stroke-width="0.8"/><path d="M3,0.5L6.6,0.5" stroke="#111" stroke-width="0.9" fill="none" stroke-linejoin="round" stroke-linecap="round"/></g><g transform="translate(191.9,37.3) scale(0.89)"><polygon points="0.6,6.4 3,4.6 8.6,4.6 6.2,6.4" fill="#9040c0" stroke="#111" stroke-width="0.6" stroke-linejoin="round"/><polygon points="0.6,8.4 3,6.6 8.6,6.6 6.2,8.4" fill="#e8e8e8" stroke="#111" stroke-width="0.6" stroke-linejoin="round"/><polygon points="1.4,4.2 3.6,2.4 8.6,2.4 6.6,4.2" fill="#38c838" stroke="#111" stroke-width="0.6" stroke-linejoin="round"/><path d="M4.4,0.6L7.6,0.6" stroke="#2850e0" stroke-width="0.9" fill="none" stroke-linejoin="round" stroke-linecap="round"/></g><g transform="translate(213.4,37.3) scale(0.89)"><rect x="0.6" y="1.2" width="1.6" height="6" fill="#b8b8b8" stroke="none" stroke-width="0.8"/><rect x="3" y="1.2" width="1.6" height="6" fill="#b0b0b0" stroke="none" stroke-width="0.8"/><path d="M0.4,1L7,1L7,6.2L4.6,8.6" stroke="#a8a8a8" stroke-width="0.9" fill="none" stroke-linejoin="round" stroke-linecap="round"/><path d="M5.2,3L7,5" stroke="#c4c4c4" stroke-width="1" fill="none" stroke-linejoin="round" stroke-linecap="round"/></g><g transform="translate(225.4,37.3) scale(0.89)"><rect x="0.2" y="0.2" width="2.6" height="8.6" fill="#30d8d8" stroke="none" stroke-width="0.8"/><ellipse cx="5.8" cy="3.8" rx="2.3" ry="2.5" fill="#f4e61e" stroke="#222" stroke-width=".7"/><rect x="4.9" y="6.2" width="1.8" height="2.2" fill="#222" stroke="none" stroke-width="0.8"/></g><g transform="translate(236.9,37.3) scale(0.89)"><path d="M0.20000000000000018,0.40000000000000013L3.0,3.2M3.0,0.40000000000000013L0.20000000000000018,3.2" stroke="#f02020" stroke-width="0.9" fill="none"/><ellipse cx="5.8" cy="3.8" rx="2.3" ry="2.5" fill="#f4e61e" stroke="#222" stroke-width=".7"/><rect x="4.9" y="6.2" width="1.8" height="2.2" fill="#222" stroke="none" stroke-width="0.8"/></g><g transform="translate(248.4,37.3) scale(0.89)"><ellipse cx="4.6" cy="4" rx="3.4" ry="3.4" fill="#ececec" stroke="#a4a4a4" stroke-width=".9"/><rect x="3.4" y="6.8" width="2.4" height="1.8" fill="#a4a4a4" stroke="none" stroke-width="0.8"/><path d="M2.6,3L4.6,5L6.6,2.6" stroke="#b8b8b8" stroke-width="0.8" fill="none" stroke-linejoin="round" stroke-linecap="round"/></g><g transform="translate(259.9,37.3) scale(0.89)"><rect x="0.6" y="1" width="1.4" height="5.6" fill="#b4b4b4" stroke="none" stroke-width="0.8"/><rect x="2.8" y="1" width="1.4" height="5.6" fill="#b4b4b4" stroke="none" stroke-width="0.8"/><ellipse cx="5.8" cy="3.8" rx="2.3" ry="2.5" fill="#d8d8d8" stroke="#9c9c9c" stroke-width=".7"/><rect x="4.9" y="6.2" width="1.8" height="2.2" fill="#9c9c9c" stroke="none" stroke-width="0.8"/></g><g transform="translate(271.4,37.3) scale(0.89)"><rect x="0.6" y="1" width="1.4" height="5.6" fill="#b4b4b4" stroke="none" stroke-width="0.8"/><rect x="2.8" y="1" width="1.4" height="5.6" fill="#b4b4b4" stroke="none" stroke-width="0.8"/><ellipse cx="5.8" cy="3.8" rx="2.3" ry="2.5" fill="#d8d8d8" stroke="#9c9c9c" stroke-width=".7"/><rect x="4.9" y="6.2" width="1.8" height="2.2" fill="#9c9c9c" stroke="none" stroke-width="0.8"/></g><g transform="translate(287.4,37.3) scale(0.89)"><ellipse cx="4.4" cy="3.6" rx="3" ry="3.2" fill="#c8c8c8" stroke="#8c8c8c" stroke-width=".9"/><rect x="3.2" y="6.4" width="2.4" height="2.2" fill="#8c8c8c" stroke="none" stroke-width="0.8"/></g><g transform="translate(298.4,37.3) scale(0.89)"><rect x="0.2" y="0.2" width="2.6" height="8.6" fill="#30d8d8" stroke="none" stroke-width="0.8"/><ellipse cx="5.8" cy="3.8" rx="2.3" ry="2.5" fill="#fff" stroke="#111" stroke-width=".7"/><rect x="4.9" y="6.2" width="1.8" height="2.2" fill="#111" stroke="none" stroke-width="0.8"/></g><g transform="translate(310.4,37.3) scale(0.89)"><path d="M0.20000000000000018,0.40000000000000013L3.0,3.2M3.0,0.40000000000000013L0.20000000000000018,3.2" stroke="#f02020" stroke-width="0.9" fill="none"/><ellipse cx="5.8" cy="3.8" rx="2.3" ry="2.5" fill="#fff" stroke="#111" stroke-width=".7"/><rect x="4.9" y="6.2" width="1.8" height="2.2" fill="#111" stroke="none" stroke-width="0.8"/></g><g transform="translate(321.9,37.3) scale(0.89)"><ellipse cx="4.6" cy="4" rx="3.4" ry="3.4" fill="#ececec" stroke="#a4a4a4" stroke-width=".9"/><rect x="3.4" y="6.8" width="2.4" height="1.8" fill="#a4a4a4" stroke="none" stroke-width="0.8"/><path d="M2.6,3L4.6,5L6.6,2.6" stroke="#b8b8b8" stroke-width="0.8" fill="none" stroke-linejoin="round" stroke-linecap="round"/></g><g transform="translate(333.4,37.3) scale(0.89)"><rect x="0.6" y="1" width="1.4" height="5.6" fill="#b4b4b4" stroke="none" stroke-width="0.8"/><rect x="2.8" y="1" width="1.4" height="5.6" fill="#b4b4b4" stroke="none" stroke-width="0.8"/><ellipse cx="5.8" cy="3.8" rx="2.3" ry="2.5" fill="#d8d8d8" stroke="#9c9c9c" stroke-width=".7"/><rect x="4.9" y="6.2" width="1.8" height="2.2" fill="#9c9c9c" stroke="none" stroke-width="0.8"/></g><g transform="translate(344.9,37.3) scale(0.89)"><rect x="0.6" y="1" width="1.4" height="5.6" fill="#b4b4b4" stroke="none" stroke-width="0.8"/><rect x="2.8" y="1" width="1.4" height="5.6" fill="#b4b4b4" stroke="none" stroke-width="0.8"/><ellipse cx="5.8" cy="3.8" rx="2.3" ry="2.5" fill="#d8d8d8" stroke="#9c9c9c" stroke-width=".7"/><rect x="4.9" y="6.2" width="1.8" height="2.2" fill="#9c9c9c" stroke="none" stroke-width="0.8"/></g><g transform="translate(355.9,37.3) scale(0.89)"><rect x="0.2" y="2.4" width="2" height="2.6" fill="#fff" stroke="#111" stroke-width="0.8"/><rect x="2.8" y="2.4" width="2" height="2.6" fill="#111" stroke="none" stroke-width="0.8"/><ellipse cx="6.6" cy="4" rx="2" ry="2.3" fill="#fff" stroke="#111" stroke-width=".8"/><rect x="5.9" y="6.2" width="1.5" height="2" fill="#111" stroke="none" stroke-width="0.8"/></g><g transform="translate(386.4,37.3) scale(0.89)"><polygon points="0.2,4.6 4.5,1.6 8.8,4.6 4.5,7.6" fill="#2848f0" stroke="#1830d0" stroke-width="0.6" stroke-linejoin="round"/><ellipse cx="4.5" cy="4.6" rx="1.9" ry="1.6" fill="#30e0e8"/><circle cx="4.5" cy="4.6" r="0.7" fill="#103080"/></g><g transform="translate(397.9,37.3) scale(0.89)"><polygon points="0.2,6.4 4.5,1.4 8.8,6.4 4.5,7.8" fill="#2848f0" stroke="#1830d0" stroke-width="0.6" stroke-linejoin="round"/><polygon points="2.6,6.2 4.5,3.4 6.4,6.2" fill="#30e0e8" stroke="none" stroke-width="0.8" stroke-linejoin="round"/></g><g transform="translate(409.4,37.3) scale(0.89)"><polygon points="0.2,4 8.8,4 7.6,6.4 1.4,6.4" fill="#2848f0" stroke="#1830d0" stroke-width="0.6" stroke-linejoin="round"/><rect x="2.4" y="4.6" width="4.4" height="1" fill="#30e0e8" stroke="none" stroke-width="0.8"/><path d="M3.2,3.4L5.8,3.4" stroke="#1830d0" stroke-width="1.2" fill="none" stroke-linejoin="round" stroke-linecap="round"/></g><g transform="translate(420.9,37.3) scale(0.89)"><polygon points="0.2,4 8.8,4 7.4,6.2 1.6,6.2" fill="#2848f0" stroke="#1830d0" stroke-width="0.6" stroke-linejoin="round"/><rect x="2.4" y="4.6" width="4.4" height="1" fill="#30e0e8" stroke="none" stroke-width="0.8"/><path d="M3.2,3.4L5.8,3.4" stroke="#1830d0" stroke-width="1.2" fill="none" stroke-linejoin="round" stroke-linecap="round"/></g><g transform="translate(431.9,37.3) scale(0.89)"><polygon points="0.2,4.6 3,2.2 6,2.2 8.8,4.6 6,7 3,7" fill="#2848f0" stroke="#1830d0" stroke-width="0.6" stroke-linejoin="round"/><ellipse cx="4.5" cy="4.6" rx="1.9" ry="1.6" fill="#30e0e8"/><circle cx="4.5" cy="4.6" r="0.7" fill="#103080"/></g><g transform="translate(443.4,37.3) scale(0.89)"><polygon points="0.2,4.6 2.4,2.6 6.6,2.6 8.8,4.6 6.6,6.6 2.4,6.6" fill="#2848f0" stroke="#1830d0" stroke-width="0.6" stroke-linejoin="round"/><rect x="2.4" y="3.9" width="4.4" height="1.4" fill="#38d048" stroke="none" stroke-width="0.8"/></g><g transform="translate(459.4,37.3) scale(0.89)"><polygon points="0.4,4.8 4.4,1.4 8.4,4.8 8.4,8.4 0.4,8.4" fill="#9020d8" stroke="#3010a0" stroke-width="0.6" stroke-linejoin="round"/><polygon points="2,5.8 4.4,3.6 6.8,5.8 6.8,8.4 2,8.4" fill="#f020d0" stroke="none" stroke-width="0.8" stroke-linejoin="round"/><path d="M4.4,0.2L4.4,2M3.4,0.8L5.6,0.8" stroke="#111" stroke-width="0.8" fill="none" stroke-linejoin="round" stroke-linecap="round"/></g><g transform="translate(481.4,37.3) scale(0.89)"><polygon points="1.6,0.8 3.8,0.4 8,6 7,8.6 4.6,7.6" fill="#fff" stroke="#111" stroke-width="0.9" stroke-linejoin="round"/><path d="M3,1.4L6.6,6.8" stroke="#2848f0" stroke-width="1.3" fill="none" stroke-linejoin="round" stroke-linecap="round"/><path d="M0.4,0.4L2,1.4" stroke="#111" stroke-width="0.9" fill="none" stroke-linejoin="round" stroke-linecap="round"/><circle cx="6.6" cy="1.6" r="0.8" fill="#111"/></g><g transform="translate(495.4,37.3) scale(0.89)"><circle cx="3.6" cy="3.6" r="2.9" fill="#fff" stroke="#222" stroke-width=".9"/><rect x="2" y="2" width="3.2" height="3.2" fill="#8a8a8a" stroke="none" stroke-width="0.8"/><path d="M3.6,1.6L3.6,5.6M1.6,3.6L5.6,3.6" stroke="#222" stroke-width="0.7" fill="none" stroke-linejoin="round" stroke-linecap="round"/><path d="M5.8,5.8L8.2,8.2" stroke="#2060d0" stroke-width="1.5" fill="none" stroke-linejoin="round" stroke-linecap="round"/></g><g transform="translate(507.4,37.3) scale(0.89)"><circle cx="3.6" cy="3.6" r="2.9" fill="#fff" stroke="#222" stroke-width=".9"/><path d="M3.6,1.8L3.6,5.4M1.8,3.6L5.4,3.6" stroke="#222" stroke-width="1" fill="none" stroke-linejoin="round" stroke-linecap="round"/><circle cx="3.6" cy="3.6" r="0.9" fill="#222"/><path d="M5.8,5.8L8.2,8.2" stroke="#2060d0" stroke-width="1.5" fill="none" stroke-linejoin="round" stroke-linecap="round"/></g><g transform="translate(519.4,37.3) scale(0.89)"><circle cx="3.6" cy="3.6" r="2.9" fill="#fff" stroke="#222" stroke-width=".9"/><path d="M5.8,5.8L8.2,8.2" stroke="#2060d0" stroke-width="1.5" fill="none" stroke-linejoin="round" stroke-linecap="round"/><path d="M6.6,1L8.4,1L8.4,2.6" stroke="#222" stroke-width="0.8" fill="none" stroke-linejoin="round" stroke-linecap="round"/></g><g transform="translate(531.4,37.3) scale(0.89)"><circle cx="3.6" cy="3.6" r="2.9" fill="#fff" stroke="#b4b4b4" stroke-width=".9"/><path d="M2,3.6L5.2,3.6" stroke="#b4b4b4" stroke-width="0.9" fill="none" stroke-linejoin="round" stroke-linecap="round"/><path d="M5.8,5.8L8.2,8.2" stroke="#c0c0c0" stroke-width="1.5" fill="none" stroke-linejoin="round" stroke-linecap="round"/></g><g transform="translate(542.9,37.3) scale(0.89)"><path d="M1,4 A3.5,3.5 0 0 1 7.4,2.4 M8,5 A3.5,3.5 0 0 1 1.6,6.6" stroke="#111" stroke-width="1.1" fill="none"/><polygon points="8.6,0.6 8.4,3.6 5.6,2.8" fill="#111" stroke="none" stroke-width="0.8" stroke-linejoin="round"/><polygon points="0.4,8.4 0.6,5.4 3.4,6.2" fill="#111" stroke="none" stroke-width="0.8" stroke-linejoin="round"/></g><g transform="translate(554.4,37.3) scale(0.89)"><path d="M4.5,0.6L4.5,8.4M0.6,4.5L8.4,4.5" stroke="#111" stroke-width="1.1" fill="none" stroke-linejoin="round" stroke-linecap="round"/><polygon points="4.5,0 3,1.9 6,1.9" fill="#111" stroke="none" stroke-width="0.8" stroke-linejoin="round"/><polygon points="4.5,9 3,7.1 6,7.1" fill="#111" stroke="none" stroke-width="0.8" stroke-linejoin="round"/><polygon points="0,4.5 1.9,3 1.9,6" fill="#111" stroke="none" stroke-width="0.8" stroke-linejoin="round"/><polygon points="9,4.5 7.1,3 7.1,6" fill="#111" stroke="none" stroke-width="0.8" stroke-linejoin="round"/></g><g transform="translate(576.4,37.3) scale(0.89)"><circle cx="4.5" cy="4.5" r="3.8" fill="#fff" stroke="#111" stroke-width=".9"/><ellipse cx="4.5" cy="4.5" rx="1.7" ry="3.8" fill="none" stroke="#111" stroke-width=".7"/><path d="M0.7,4.5L8.3,4.5M1.4,2.4L7.6,2.4M1.4,6.6L7.6,6.6" stroke="#111" stroke-width="0.7" fill="none" stroke-linejoin="round" stroke-linecap="round"/></g><g transform="translate(588.4,37.3) scale(0.89)"><rect x="0.4" y="0.6" width="5.6" height="5.6" fill="#30d8e0" stroke="#111" stroke-width="0.9"/><rect x="2.8" y="2.8" width="5.6" height="5.6" fill="#30d8e0" stroke="#111" stroke-width="0.9"/></g><g transform="translate(599.4,37.3) scale(0.89)"><polygon points="0.2,2.4 2.6,0.4 8.8,0.4 8.8,6.4 6.4,8.6 0.2,8.6" fill="#20c8d0" stroke="none" stroke-width="0.8" stroke-linejoin="round"/><polygon points="0.2,2.4 2.6,0.4 8.8,0.4 6.4,2.4" fill="#58ecf0" stroke="none" stroke-width="0.8" stroke-linejoin="round"/><polygon points="6.4,2.4 8.8,0.4 8.8,6.4 6.4,8.6" fill="#109aa4" stroke="none" stroke-width="0.8" stroke-linejoin="round"/></g><g transform="translate(610.4,37.3) scale(0.89)"><rect x="0.4" y="0.6" width="5.2" height="5.2" fill="#30d8e0" stroke="#111" stroke-width="0.9"/><rect x="2.8" y="3" width="5.4" height="5.4" fill="#30d8e0" stroke="#111" stroke-width="0.9"/><path d="M0.8,0.8L3.4,0.8" stroke="#f02020" stroke-width="1" fill="none" stroke-linejoin="round" stroke-linecap="round"/></g><g transform="translate(621.4,37.3) scale(0.89)"><polygon points="1.2,2 4.4,0.6 7.8,2 7,6.4 4.4,8.6 2,6.4" fill="#9c9c9c" stroke="#8a8a8a" stroke-width="0.6" stroke-linejoin="round"/></g><g transform="translate(632.9,37.3) scale(0.89)"><rect x="0.4" y="1" width="8.2" height="5.6" fill="#fff" stroke="#111" stroke-width="1"/><path d="M1,3.8L3.4,2.8L5.6,3.8L8,3" stroke="#f02020" stroke-width="1" fill="none" stroke-linejoin="round" stroke-linecap="round"/><path d="M6.6,8L8.6,8L8.6,6.4" stroke="#111" stroke-width="0.8" fill="none" stroke-linejoin="round" stroke-linecap="round"/></g><g transform="translate(1.6,0.7) scale(.8,.64)"><polygon points="0.4,4.4 3,1.2 3.4,3 8,1.4 8,5.6 3.6,6.2 3,8" fill="#22e022" stroke="#7fd08f" stroke-width="0.5" stroke-linejoin="round"/></g><g transform="translate(4.3,9.6) scale(.84,.9)"><polygon points="0.4,4.2 3.6,0.4 3.4,2.4 7.4,1.2 5.2,4.2 7.6,7.2 3.4,6.2 3.6,8.2" fill="#22e022" stroke="#2a8a4a" stroke-width="0.5" stroke-linejoin="round"/><circle cx="0.6" cy="3.4" r="0.7" fill="#102090"/><circle cx="1.2" cy="5.6" r="0.6" fill="#111"/></g></svg>
<div id="left" class="a"></div>
<div class="hdr" style="top:50px"></div>
<svg class="a" style="left:98px;top:49.3px" width="7" height="7"><path d="M1.8,2L4.8,5M4.8,2L1.8,5" stroke="#111" stroke-width=".95"/></svg>
<div class="a" style="left:2px;top:57px;width:103px;height:192px;border:1px solid #4a4a4a;border-right-color:#fff;border-bottom-color:#fff;box-sizing:border-box;background:#f0f0f0"></div>
<div class="a" style="left:4.3px;top:68.6px;width:99.7px;height:179.6px;background:#fff;border:1px solid #dcdcdc;border-top:none;box-sizing:border-box"></div>
<div class="a" style="left:30.8px;top:68px;width:73.2px;height:1px;background:#555"></div>
<div class="a" style="left:6.6px;top:59.8px;width:24.2px;height:9.4px;background:#fcfcfc;border:1px solid #e4e4e4;border-right-color:#505050;border-bottom:none;box-sizing:border-box"></div>
<div class="a" style="left:30.8px;top:60.8px;width:24.2px;height:7.8px;background:#f2f2f2;border:1px solid #4c4c4c;border-left:none;border-top-color:#e0e0e0;border-bottom:none;box-sizing:border-box"></div>
<svg class="a" style="left:0;top:0" width="107" height="250" viewBox="0 0 107 250"><g transform="translate(14.8,69.6)"><path d="M0,4L2,4" stroke="#111" stroke-width="1" fill="none" stroke-linejoin="round" stroke-linecap="round"/><circle cx="4" cy="4" r="2.7" fill="#f2f000" stroke="#111" stroke-width=".9"/><rect x="4.6" y="2.2" width="1.4" height="3.6" fill="#fff" stroke="none" stroke-width="0.8"/><path d="M5,2.2L7.8,2.2M5,5.8L7.8,5.8" stroke="#111" stroke-width="1.1" fill="none" stroke-linejoin="round" stroke-linecap="round"/></g><rect x="6.75" y="71.35" width="4.5" height="4.5" fill="#fff" stroke="#7a7a7a" stroke-width=".7"/><path d="M7.8,73.6h2.4M9,72.39999999999999v2.4" stroke="#000" stroke-width=".75"/><path d="M11.4,73.6H14.6" stroke="#a8a8a8" stroke-width=".6" stroke-dasharray=".6,.6"/><g transform="translate(14.8,77.6)"><rect x="0" y="0" width="8" height="8" fill="#f8f27c" stroke="none" stroke-width="0.8"/><polygon points="0.8,2.4 4,0.8 7.4,2.6 4.6,7.4 2,5.6" fill="#f4e61e" stroke="#111" stroke-width="0.9" stroke-linejoin="round"/><circle cx="4.2" cy="3.6" r="0.7" fill="#111"/></g><rect x="6.75" y="79.35" width="4.5" height="4.5" fill="#fff" stroke="#7a7a7a" stroke-width=".7"/><path d="M7.8,81.6h2.4M9,80.39999999999999v2.4" stroke="#000" stroke-width=".75"/><path d="M11.4,81.6H14.6" stroke="#a8a8a8" stroke-width=".6" stroke-dasharray=".6,.6"/><g transform="translate(14.8,85.6)"><rect x="0" y="0" width="8" height="8" fill="#f8f27c" stroke="none" stroke-width="0.8"/><path d="M0.6,7.2L2.8,3.4L4.6,5L7.4,1" stroke="#111" stroke-width="0.9" fill="none" stroke-linejoin="round" stroke-linecap="round"/></g><rect x="6.75" y="87.35" width="4.5" height="4.5" fill="#fff" stroke="#7a7a7a" stroke-width=".7"/><path d="M7.8,89.6h2.4M9,88.39999999999999v2.4" stroke="#000" stroke-width=".75"/><path d="M11.4,89.6H14.6" stroke="#a8a8a8" stroke-width=".6" stroke-dasharray=".6,.6"/><g transform="translate(14.8,93.6)"><rect x="0" y="0" width="8" height="8" fill="#f8f27c" stroke="none" stroke-width="0.8"/><path d="M1.6,1.6L6.4,6.4M6.4,1.6L1.6,6.4" stroke="#111" stroke-width="0.85" fill="none"/></g><rect x="6.75" y="95.35" width="4.5" height="4.5" fill="#fff" stroke="#7a7a7a" stroke-width=".7"/><path d="M7.8,97.6h2.4M9,96.39999999999999v2.4" stroke="#000" stroke-width=".75"/><path d="M11.4,97.6H14.6" stroke="#a8a8a8" stroke-width=".6" stroke-dasharray=".6,.6"/><g transform="translate(14.8,101.6)"><rect x="0" y="0" width="8" height="8" fill="#f8f27c" stroke="none" stroke-width="0.8"/><polygon points="0.6,2.6 2.6,0.6 7.6,5.4 5.6,7.4" fill="#fbf7a0" stroke="#b0a840" stroke-width="0.7" stroke-linejoin="round"/><path d="M1.6,1.6L6.6,6.4" stroke="#6c6c30" stroke-width="0.5" fill="none" stroke-linejoin="round" stroke-linecap="round"/></g><rect x="6.75" y="103.35" width="4.5" height="4.5" fill="#fff" stroke="#7a7a7a" stroke-width=".7"/><path d="M7.8,105.6h2.4M9,104.39999999999999v2.4" stroke="#000" stroke-width=".75"/><path d="M11.4,105.6H14.6" stroke="#a8a8a8" stroke-width=".6" stroke-dasharray=".6,.6"/><g transform="translate(14.8,109.6)"><rect x="0" y="0" width="8" height="8" fill="#f8f27c" stroke="none" stroke-width="0.8"/><path d="M1.6,0.8L1.6,6.6L7.4,6.6" stroke="#111" stroke-width="0.95" fill="none" stroke-linejoin="round" stroke-linecap="round"/><path d="M1.6,6.6L5,3.2" stroke="#111" stroke-width="0.7" fill="none" stroke-linejoin="round" stroke-linecap="round"/></g><rect x="6.75" y="111.35" width="4.5" height="4.5" fill="#fff" stroke="#7a7a7a" stroke-width=".7"/><path d="M7.8,113.6h2.4M9,112.39999999999999v2.4" stroke="#000" stroke-width=".75"/><path d="M11.4,113.6H14.6" stroke="#a8a8a8" stroke-width=".6" stroke-dasharray=".6,.6"/><g transform="translate(14.8,117.6)"><rect x="0" y="0" width="8" height="8" fill="#f8f27c" stroke="none" stroke-width="0.8"/><rect x="0.8" y="0.8" width="6.4" height="6.4" fill="#f4e61e" stroke="#111" stroke-width="0.9"/><circle cx="4" cy="4" r="1.1" fill="#111"/></g><path d="M9,121.6H14.6" stroke="#a8a8a8" stroke-width=".6" stroke-dasharray=".6,.6"/><g transform="translate(14.8,125.6)"><rect x="0" y="0" width="8" height="8" fill="#f8f27c" stroke="none" stroke-width="0.8"/><path d="M0.8,1L5,1L3.4,7L0.8,7L0.8,1" stroke="#111" stroke-width="1" fill="none" stroke-linejoin="round" stroke-linecap="round"/><path d="M5.2,6.6L7.4,1.4" stroke="#e030e0" stroke-width="1.4" fill="none" stroke-linejoin="round" stroke-linecap="round"/></g><path d="M9,129.6H14.6" stroke="#a8a8a8" stroke-width=".6" stroke-dasharray=".6,.6"/><g transform="translate(14.8,133.6)"><rect x="0" y="0" width="8" height="8" fill="#f8f27c" stroke="none" stroke-width="0.8"/><polygon points="1,2 4,0.8 7.4,2 7,6.6 2,7.4" fill="#f4e61e" stroke="#c02020" stroke-width="0.9" stroke-linejoin="round"/><path d="M3,2.6L3,5.6M5,2.6L5,5.6" stroke="#c02020" stroke-width="0.8" fill="none" stroke-linejoin="round" stroke-linecap="round"/></g><path d="M9,137.6H14.6" stroke="#a8a8a8" stroke-width=".6" stroke-dasharray=".6,.6"/><g transform="translate(14.8,141.6)"><rect x="0" y="0" width="8" height="8" fill="#f8f27c" stroke="none" stroke-width="0.8"/><polygon points="0.6,2.8 2.4,1 7.4,1 7.4,5.6 5.6,7.4 0.6,7.4" fill="#f4e61e" stroke="#111" stroke-width="0.9" stroke-linejoin="round"/><path d="M0.6,2.8L5.6,2.8L7.4,1M5.6,2.8L5.6,7.4" stroke="#111" stroke-width="0.7" fill="none" stroke-linejoin="round" stroke-linecap="round"/></g><path d="M9,145.6H14.6" stroke="#a8a8a8" stroke-width=".6" stroke-dasharray=".6,.6"/><g transform="translate(14.8,149.6)"><rect x="0" y="0" width="8" height="8" fill="#f8f27c" stroke="none" stroke-width="0.8"/><polygon points="0.6,1 3,1.8 5,0.6 7.4,1.6 6.6,4 7.6,7 5,6.4 2,7.6 1.4,4.4" fill="#f4e61e" stroke="#111" stroke-width="0.9" stroke-linejoin="round"/><path d="M2.6,2.6L5.4,5.4M5.4,2.6L2.6,5.4" stroke="#111" stroke-width="0.7" fill="none"/></g><path d="M9,153.6H14.6" stroke="#a8a8a8" stroke-width=".6" stroke-dasharray=".6,.6"/><g transform="translate(14.8,157.6)"><rect x="0" y="0" width="8" height="8" fill="#f8f27c" stroke="none" stroke-width="0.8"/><path d="M1,7L1.6,3.4L4,1.4L7,1.4" stroke="#e84040" stroke-width="1.1" fill="none" stroke-linejoin="round" stroke-linecap="round"/><circle cx="1" cy="7" r="0.9" fill="#e02020"/><circle cx="7" cy="1.4" r="0.9" fill="#e02020"/></g><path d="M9,161.6H14.6" stroke="#a8a8a8" stroke-width=".6" stroke-dasharray=".6,.6"/><g transform="translate(14.8,165.6)"><rect x="0" y="1.6" width="8" height="5" fill="#f8f27c" stroke="none" stroke-width="0.8"/><rect x="0.6" y="2.2" width="6.8" height="3.6" fill="#e8e8e8" stroke="#111" stroke-width="0.9"/><path d="M1.6,4.8L3,3.2L4.4,4.6L6.2,3.2" stroke="#111" stroke-width="0.7" fill="none" stroke-linejoin="round" stroke-linecap="round"/></g><path d="M9,169.6H14.6" stroke="#a8a8a8" stroke-width=".6" stroke-dasharray=".6,.6"/><g transform="translate(14.8,173.6)"><rect x="0" y="0" width="8" height="8" fill="#f8f27c" stroke="none" stroke-width="0.8"/><path d="M0.8,7.4L1.4,3.6L3.6,1.4L7,1" stroke="#111" stroke-width="0.8" fill="none" stroke-linejoin="round" stroke-linecap="round"/><circle cx="0.8" cy="7.4" r="0.9" fill="#111"/><circle cx="2" cy="2.8" r="0.9" fill="#111"/><circle cx="7" cy="1" r="0.9" fill="#111"/></g><path d="M9,177.6H14.6" stroke="#a8a8a8" stroke-width=".6" stroke-dasharray=".6,.6"/><g transform="translate(14.8,181.6)"><rect x="0" y="1.4" width="8" height="5.2" fill="#f8f27c" stroke="none" stroke-width="0.8"/><text x="0.2" y="5.8" font-size="5.4" font-weight="bold" font-family="Liberation Sans, sans-serif" fill="#111">x=</text></g><rect x="6.75" y="183.35" width="4.5" height="4.5" fill="#fff" stroke="#7a7a7a" stroke-width=".7"/><path d="M7.8,185.6h2.4M9,184.4v2.4" stroke="#000" stroke-width=".75"/><path d="M11.4,185.6H14.6" stroke="#a8a8a8" stroke-width=".6" stroke-dasharray=".6,.6"/><g transform="translate(14.8,189.6)"><rect x="0" y="0" width="8" height="8" fill="#f8f27c" stroke="none" stroke-width="0.8"/><text x="0.6" y="7.4" font-size="8.6" font-weight="bold" font-family="Liberation Sans, sans-serif" fill="#111">A</text></g><path d="M9,193.6H14.6" stroke="#a8a8a8" stroke-width=".6" stroke-dasharray=".6,.6"/><g transform="translate(14.8,197.6)"><rect x="0" y="0" width="8" height="8" fill="#f8f27c" stroke="none" stroke-width="0.8"/><path d="M1.6,2.9L6.4,2.9M1.6,5.3L6.4,5.3" stroke="#111" stroke-width="1.15" fill="none" stroke-linejoin="round" stroke-linecap="round"/></g><path d="M9,201.6H14.6" stroke="#a8a8a8" stroke-width=".6" stroke-dasharray=".6,.6"/><g transform="translate(14.8,205.6)"><rect x="0" y="0" width="8" height="8" fill="#f8f27c" stroke="none" stroke-width="0.8"/><rect x="0.8" y="0.8" width="6.4" height="6.4" fill="#b8b460" stroke="#5c5c30" stroke-width="0.8"/><path d="M1.4,2.6L6.6,2.6M1.4,4.2L6.6,4.2M1.4,5.8L6.6,5.8" stroke="#5c5c30" stroke-width="0.6" fill="none" stroke-linejoin="round" stroke-linecap="round"/></g><rect x="6.75" y="207.35" width="4.5" height="4.5" fill="#fff" stroke="#7a7a7a" stroke-width=".7"/><path d="M7.8,209.6h2.4M9,208.4v2.4" stroke="#000" stroke-width=".75"/><path d="M11.4,209.6H14.6" stroke="#a8a8a8" stroke-width=".6" stroke-dasharray=".6,.6"/><g transform="translate(14.8,213.6)"><rect x="0" y="0" width="8" height="8" fill="#f8f27c" stroke="none" stroke-width="0.8"/><path d="M4,0.8L4,7.2M0.8,4L7.2,4M1.8,1.8L6.2,6.2M6.2,1.8L1.8,6.2" stroke="#111" stroke-width="0.8" fill="none" stroke-linejoin="round" stroke-linecap="round"/><circle cx="4" cy="4" r="1.1" fill="#f2f000"/></g><rect x="6.75" y="215.35" width="4.5" height="4.5" fill="#fff" stroke="#7a7a7a" stroke-width=".7"/><path d="M7.8,217.6h2.4M9,216.4v2.4" stroke="#000" stroke-width=".75"/><path d="M11.4,217.6H14.6" stroke="#a8a8a8" stroke-width=".6" stroke-dasharray=".6,.6"/><g transform="translate(14.8,221.6)"><path d="M1.6,0.4L1.6,7.8" stroke="#111" stroke-width="0.9" fill="none" stroke-linejoin="round" stroke-linecap="round"/><rect x="2" y="1.6" width="1.8" height="5" fill="#fff" stroke="#111" stroke-width="0.7"/><path d="M0.2,0.8L1.4,0.8" stroke="#20a020" stroke-width="1" fill="none" stroke-linejoin="round" stroke-linecap="round"/><path d="M4,4.4L7.6,4.4" stroke="#e02020" stroke-width="1.2" fill="none" stroke-linejoin="round" stroke-linecap="round"/><path d="M0,4.4L1.4,4.4" stroke="#20a020" stroke-width="0.9" fill="none" stroke-linejoin="round" stroke-linecap="round"/></g><rect x="6.75" y="223.35" width="4.5" height="4.5" fill="#fff" stroke="#7a7a7a" stroke-width=".7"/><path d="M7.8,225.6h2.4M9,224.4v2.4" stroke="#000" stroke-width=".75"/><path d="M11.4,225.6H14.6" stroke="#a8a8a8" stroke-width=".6" stroke-dasharray=".6,.6"/><path d="M9,76V226" stroke="#b4b4b4" stroke-width=".6" stroke-dasharray=".6,.6"/></svg>
<div class="a" style="left:0;top:249.4px;width:105px;height:1.4px;background:#fafafa"></div><div class="a" style="left:0;top:250.8px;width:105px;height:.8px;background:#dcdad8"></div>
<div class="a" style="left:0;top:434.6px;width:105px;height:1.4px;background:#fafafa"></div><div class="a" style="left:0;top:436.0px;width:105px;height:.8px;background:#dcdad8"></div>
<div class="hdr" style="top:252.7px"></div>
<svg class="a" style="left:98px;top:252.0px" width="7" height="7"><path d="M1.8,2L4.8,5M4.8,2L1.8,5" stroke="#111" stroke-width=".95"/></svg>
<div class="a" style="left:2px;top:259.5px;width:103px;height:174px;border:1px solid #565656;border-right-color:#fff;border-bottom-color:#fff;box-sizing:border-box;background:#f0f0f0"></div>
<div class="a" style="left:3.5px;top:261px;width:98.5px;height:7.5px;border:1px solid #9c9c9c;border-left-color:#e0e0e0;border-top-color:#e8e8e8;box-sizing:border-box;background:#f2f2f2"></div>
<div class="a" style="left:95px;top:261.3px;width:6.6px;height:6.8px;background:#f4f4f4;border:1px solid #fff;border-right-color:#777;border-bottom-color:#777;box-sizing:border-box"></div>
<div class="hdr" style="top:438.6px"></div>
<svg class="a" style="left:98px;top:437.90000000000003px" width="7" height="7"><path d="M1.8,2L4.8,5M4.8,2L1.8,5" stroke="#111" stroke-width=".95"/></svg>
<div class="a" style="left:2px;top:445.5px;width:103px;height:67px;border:1px solid #565656;border-right-color:#fff;border-bottom-color:#fff;box-sizing:border-box;background:#f0f0f0"></div>
<svg class="a" style="left:0;top:0" width="107" height="525" viewBox="0 0 107 525"><rect x="5.7" y="447.8" width="10.6" height="9.6" fill="#f4f4f4" stroke="#fff" stroke-width=".8"/><path d="M16.3,447.8v9.6h-10.6" fill="none" stroke="#6e6e6e" stroke-width=".9"/><rect x="17.6" y="447.8" width="10.6" height="9.6" fill="#f4f4f4" stroke="#fff" stroke-width=".8"/><path d="M28.200000000000003,447.8v9.6h-10.6" fill="none" stroke="#6e6e6e" stroke-width=".9"/><rect x="29.4" y="447.8" width="10.6" height="9.6" fill="#f4f4f4" stroke="#fff" stroke-width=".8"/><path d="M40.0,447.8v9.6h-10.6" fill="none" stroke="#6e6e6e" stroke-width=".9"/><rect x="41.2" y="447.8" width="10.6" height="9.6" fill="#f4f4f4" stroke="#fff" stroke-width=".8"/><path d="M51.800000000000004,447.8v9.6h-10.6" fill="none" stroke="#6e6e6e" stroke-width=".9"/><rect x="53.2" y="447.8" width="10.6" height="9.6" fill="#f4f4f4" stroke="#fff" stroke-width=".8"/><path d="M63.800000000000004,447.8v9.6h-10.6" fill="none" stroke="#6e6e6e" stroke-width=".9"/><g transform="translate(7.2,449.2)"><rect x="0" y="0" width="2.2" height="6.6" fill="#fff" stroke="#222" stroke-width="0.7"/><rect x="3" y="0" width="2.2" height="6.6" fill="#fff" stroke="#222" stroke-width="0.7"/><path d="M6.6,0.4L6.6,6.2M5.6,1.4L7.6,1.4M5.6,5.2L7.6,5.2" stroke="#222" stroke-width="0.7" fill="none" stroke-linejoin="round" stroke-linecap="round"/></g><g transform="translate(19.6,449.4)"><path d="M3.2,6L3.2,0.8M1.2,2.8L3.2,0.8L5.2,2.8" stroke="#707070" stroke-width="1" fill="none" stroke-linejoin="round" stroke-linecap="round"/></g><g transform="translate(31.4,449.4)"><path d="M3.2,0.4L3.2,5.6M1.2,3.6L3.2,5.6L5.2,3.6" stroke="#707070" stroke-width="1" fill="none" stroke-linejoin="round" stroke-linecap="round"/></g><g transform="translate(43.4,449.2)"><path d="M0.5,0.6999999999999997L5.9,6.1M5.9,0.6999999999999997L0.5,6.1" stroke="#5e5e5e" stroke-width="1" fill="none"/></g><g transform="translate(55,449)"><rect x="0.6" y="0.4" width="6" height="6.8" fill="#c4c4c4" stroke="#8c8c8c" stroke-width="0.7"/><path d="M1.2000000000000002,1.4L6.0,6.199999999999999M6.0,1.4L1.2000000000000002,6.199999999999999" stroke="#7a7a7a" stroke-width="0.9" fill="none"/></g><rect x="5.2" y="459.2" width="99" height="53" fill="#fff"/><rect x="5.2" y="459.2" width="99" height="8.2" fill="#f0f0f0"/><path d="M5.2,513V459.2H104" fill="none" stroke="#5c5c5c" stroke-width=".9"/><path d="M5.8,467.3H60.6V460M62,467.3H104" fill="none" stroke="#6c6c6c" stroke-width=".9"/><path d="M61.6,460V467" fill="none" stroke="#fff" stroke-width=".8"/><rect x="5.6" y="506" width="98" height="6.4" fill="#eaeaea"/><rect x="10" y="506.4" width="72.6" height="5.4" rx="1.2" fill="#dcdcdc" stroke="#9c9c9c" stroke-width=".6"/><path d="M44.6,507.8v2.6M45.8,507.8v2.6M47,507.8v2.6" stroke="#8c8c8c" stroke-width=".5"/><path d="M8,507.6L6.4,509.1L8,510.6Z M99.4,507.6L101,509.1L99.4,510.6Z" fill="#333"/></svg>
<div class="a" style="left:105px;top:49px;width:2.5px;height:464px;background:linear-gradient(90deg,#fff,#e4e4e4)"></div>
<div id="view" class="a"></div>
<div class="a" style="left:698.5px;top:49px;width:1.5px;height:464px;background:#fbfbfb"></div>
<svg class="a" style="left:0;top:0" width="700" height="525" viewBox="0 0 700 525"><path d="M109.7,280.6L695.4,342.4" stroke="#a2a2a2" stroke-width="1.15" stroke-dasharray="1.9,2.1199999999999997" fill="none"/><path d="M118.4,510.6L696.3,231" stroke="#a2a2a2" stroke-width="1.15" stroke-dasharray="1.9,2.5500000000000003" fill="none"/><path d="M508.3,57.8L508.3,511" stroke="#a2a2a2" stroke-width="1.25" stroke-dasharray="1.8,2.2" fill="none"/><path d="M303.5,85.8 L580.5,115.2 L580.5,450 L303.5,421.5 Z" stroke="#00bc00" stroke-width="1.0" fill="none" stroke-linejoin="round" stroke-linecap="round"/><rect x="302.7" y="420.7" width="1.6" height="1.6" fill="#e8e020"/><path d="M457.3,131.7 L547.5,149.2" stroke="#e2555a" stroke-width="1.05" fill="none" stroke-linejoin="round" stroke-linecap="round"/><path d="M455,133.4 V140.9" stroke="#e444e6" stroke-width="1.45" fill="none" stroke-linejoin="round" stroke-linecap="round"/><path d="M455.2,133.2 L457,131.8" stroke="#e4e200" stroke-width="1" fill="none" stroke-linejoin="round" stroke-linecap="round"/><path d="M455.3,141.1 L506.3,158.2" stroke="#e2555a" stroke-width="1.05" fill="none" stroke-linejoin="round" stroke-linecap="round"/><path d="M506.3,158.2 Q521,163.5 525.7,190" stroke="#e4e200" stroke-width="1.15" fill="none" stroke-linejoin="round" stroke-linecap="round"/><path d="M525.7,190 L507.6,301" stroke="#e2555a" stroke-width="1.05" fill="none" stroke-linejoin="round" stroke-linecap="round"/><path d="M507.6,301 Q503.5,323.5 477.5,326.3" stroke="#e4e200" stroke-width="1.15" fill="none" stroke-linejoin="round" stroke-linecap="round"/><path d="M477.5,326.3 L448.8,323.2" stroke="#e2555a" stroke-width="1.05" fill="none" stroke-linejoin="round" stroke-linecap="round"/><path d="M448.8,323.2 L357,313.3 H350.6" stroke="#e444e6" stroke-width="1.45" fill="none" stroke-linejoin="round" stroke-linecap="round"/><path d="M350.6,313.6 V332.6" stroke="#e2555a" stroke-width="1.05" fill="none" stroke-linejoin="round" stroke-linecap="round"/><path d="M350.6,332.6 Q350.4,343.6 338.8,345" stroke="#e4e200" stroke-width="1.15" fill="none" stroke-linejoin="round" stroke-linecap="round"/><path d="M338.8,345 L303.8,341.3" stroke="#e2555a" stroke-width="1.05" fill="none" stroke-linejoin="round" stroke-linecap="round"/><path d="M356.8,313.3 V367.6" stroke="#e444e6" stroke-width="1.45" fill="none" stroke-linejoin="round" stroke-linecap="round"/><path d="M448.9,323.3 V347.8" stroke="#e444e6" stroke-width="1.45" fill="none" stroke-linejoin="round" stroke-linecap="round"/><path d="M494.3,138.9 L496.8,139.4" stroke="#000" stroke-width="1.6" fill="none" stroke-linejoin="round" stroke-linecap="round"/><path d="M493.6,138.6 L495.6,141.5 L497.40000000000003,139.6 M495.6,141.5 V143.7" stroke="#e4e200" stroke-width="1" fill="none" stroke-linejoin="round" stroke-linecap="round"/><ellipse cx="495.75" cy="145.2" rx="1.25" ry="1.55" fill="none" stroke="#e4e200" stroke-width=".95"/><path d="M512.3000000000001,142.4 L514.8000000000001,142.9" stroke="#000" stroke-width="1.6" fill="none" stroke-linejoin="round" stroke-linecap="round"/><path d="M511.6,142.1 L513.6,145.0 L515.4,143.1 M513.6,145.0 V147.2" stroke="#e4e200" stroke-width="1" fill="none" stroke-linejoin="round" stroke-linecap="round"/><ellipse cx="513.75" cy="148.7" rx="1.25" ry="1.55" fill="none" stroke="#e4e200" stroke-width=".95"/><path d="M531.0,146.0 L533.5,146.5" stroke="#000" stroke-width="1.6" fill="none" stroke-linejoin="round" stroke-linecap="round"/><path d="M530.3,145.7 L532.3,148.6 L534.0999999999999,146.7 M532.3,148.6 V150.8" stroke="#e4e200" stroke-width="1" fill="none" stroke-linejoin="round" stroke-linecap="round"/><ellipse cx="532.4499999999999" cy="152.3" rx="1.25" ry="1.55" fill="none" stroke="#e4e200" stroke-width=".95"/><path d="M547.5,149.2 q.8,1.8 1.4,1.9 q1,.6 1.6,1.7" stroke="#e4e200" stroke-width="1" fill="none" stroke-linejoin="round" stroke-linecap="round"/><path d="M550.6,152.9 L546.4,178.70000000000002" stroke="#e2555a" stroke-width="1.05" fill="none" stroke-linejoin="round" stroke-linecap="round"/><path d="M546.4,178.7 l-3.1,1.7 q-1.8,-3.8 -4.3,-4 q-2.8,.4 -2.3,3 q.2,2.8 1.8,3.4 q2.5,.6 3.6,1 L545.7,183.6" stroke="#e4e200" stroke-width="1.05" fill="none" stroke-linejoin="round" stroke-linecap="round"/><path d="M545.7,183.6 L541.0,212.3" stroke="#e2555a" stroke-width="1.05" fill="none" stroke-linejoin="round" stroke-linecap="round"/><path d="M541.0,212.3 l-3.1,1.7 q-1.8,-3.8 -4.3,-4 q-2.8,.4 -2.3,3 q.2,2.8 1.8,3.4 q2.5,.6 3.6,1 L540.0,218.6" stroke="#e4e200" stroke-width="1.05" fill="none" stroke-linejoin="round" stroke-linecap="round"/><path d="M540.0,218.6 L534.6,252.3" stroke="#e2555a" stroke-width="1.05" fill="none" stroke-linejoin="round" stroke-linecap="round"/><path d="M534.6,252.3 l-3.1,1.7 q-1.8,-3.8 -4.3,-4 q-2.8,.4 -2.3,3 q.2,2.8 1.8,3.4 q2.5,.6 3.6,1 L533.8,257.6" stroke="#e4e200" stroke-width="1.05" fill="none" stroke-linejoin="round" stroke-linecap="round"/><path d="M533.8,257.6 L527.8,294.90000000000003" stroke="#e2555a" stroke-width="1.05" fill="none" stroke-linejoin="round" stroke-linecap="round"/><path d="M527.8,294.9 l-3.1,1.7 q-1.8,-3.8 -4.3,-4 q-2.8,.4 -2.3,3 q.2,2.8 1.8,3.4 q2.5,.6 3.6,1 L526.9,300.2" stroke="#e4e200" stroke-width="1.05" fill="none" stroke-linejoin="round" stroke-linecap="round"/><path d="M526.9,300.2 L521.3,335" stroke="#e2555a" stroke-width="1.05" fill="none" stroke-linejoin="round" stroke-linecap="round"/><path d="M521.3,335 Q518.2,334.9 517.6,336.4 Q516.6,337.8 516.4,339.9" stroke="#e4e200" stroke-width="1" fill="none" stroke-linejoin="round" stroke-linecap="round"/><path d="M516.4,340 L485,347.4" stroke="#e2555a" stroke-width="1.05" fill="none" stroke-linejoin="round" stroke-linecap="round"/><path d="M479.3,349 L477.8,342.0 Q476.90000000000003,339.4 479.40000000000003,339.4 L481.2,339.4 Q482.8,339.4 482.8,341.4 Q482.8,343.0 481.3,344.2 Q481.2,345.79999999999995 485,347.4" stroke="#e4e200" stroke-width="1.05" fill="none" stroke-linejoin="round" stroke-linecap="round"/><path d="M479.3,349 Q465,352 452,351.6" stroke="#e2555a" stroke-width="1.05" fill="none" stroke-linejoin="round" stroke-linecap="round"/><path d="M452,351.6 q-.6,-2.6 -3.1,-3.2 q-2.4,.4 -3.2,2.8" stroke="#e4e200" stroke-width="1" fill="none" stroke-linejoin="round" stroke-linecap="round"/><path d="M445.7,351.2 L420.2,349.2" stroke="#e2555a" stroke-width="1.05" fill="none" stroke-linejoin="round" stroke-linecap="round"/><path d="M414,349.2 L414.2,342.40000000000003 Q413.3,339.8 415.8,339.8 L418.2,339.8 Q419.8,339.8 419.8,341.8 Q419.8,343.40000000000003 418.3,344.6 Q418.2,347.59999999999997 420.2,349.2" stroke="#e4e200" stroke-width="1.05" fill="none" stroke-linejoin="round" stroke-linecap="round"/><path d="M414,349.2 Q400,349.4 388.3,353.4" stroke="#e2555a" stroke-width="1.05" fill="none" stroke-linejoin="round" stroke-linecap="round"/><path d="M384.3,355.9 L383.5,348.5 Q382.6,345.9 385.1,345.9 L387.79999999999995,345.9 Q389.4,345.9 389.4,347.9 Q389.4,349.5 387.9,350.7 Q387.79999999999995,351.79999999999995 388.3,353.4" stroke="#e4e200" stroke-width="1.05" fill="none" stroke-linejoin="round" stroke-linecap="round"/><path d="M384.3,355.9 L358.8,369.6" stroke="#e2555a" stroke-width="1.05" fill="none" stroke-linejoin="round" stroke-linecap="round"/><path d="M358.8,369.6 q-.6,-2 -2.4,-1.8 q-2,.4 -2.6,3.2" stroke="#e4e200" stroke-width="1" fill="none" stroke-linejoin="round" stroke-linecap="round"/><path d="M353.8,371.2 Q343,378 332.6,379.4" stroke="#e2555a" stroke-width="1.05" fill="none" stroke-linejoin="round" stroke-linecap="round"/><path d="M326.3,380.3 L325.3,372.90000000000003 Q324.40000000000003,370.3 326.90000000000003,370.3 L329.0,370.3 Q330.6,370.3 330.6,372.3 Q330.6,373.90000000000003 329.1,375.1 Q329.0,377.79999999999995 332.6,379.4" stroke="#e4e200" stroke-width="1.05" fill="none" stroke-linejoin="round" stroke-linecap="round"/><path d="M326.3,380.3 L303.8,384.5" stroke="#e2555a" stroke-width="1.05" fill="none" stroke-linejoin="round" stroke-linecap="round"/></svg>
<svg class="a" style="left:109px;top:507px" width="7" height="7"><path d="M.8,.8L5.4,5.6M5.4,.8L.8,5.6" stroke="#fff" stroke-width="1.2"/></svg>
<div id="status" class="a"></div>
<div class="pane" style="left:281px;top:516px;width:158px"></div>
<div class="pane" style="left:441.6px;top:516px;width:53.39999999999998px"></div>
<div class="pane" style="left:497px;top:516px;width:42px"></div>
<div class="pane" style="left:541px;top:516px;width:42px"></div>
<div class="pane" style="left:585px;top:516px;width:62px"></div>
<div class="pane" style="left:649px;top:516px;width:49.5px"></div>
<div class="a" style="left:0;top:523.6px;width:700px;height:1.4px;background:#d4dbe6"></div>
<div class="a" style="left:210.5px;top:523.6px;width:46.5px;height:1.4px;background:#a4b6d2"></div>
<div class="a" style="left:420px;top:523.6px;width:280px;height:1.4px;background:#b4c2d8"></div>
<div class="a" style="left:0;top:0;width:700px;height:525px;will-change:transform"><span class="t" style="left:12.1px;top:0px;font-size:26.4px;transform:translateY(0.74px) rotate(.2deg) scale(0.2233,0.25);color:#0c0c18;text-shadow:0 0 7px #e6eefa,0 0 10px #dde8f8">MultiSurf 8.6 - [ pb10-5.ms2:1]</span><span class="t" style="left:13.8px;top:10px;font-size:25.6px;transform:translateY(0.26px) rotate(.2deg) scale(0.2230,0.25);color:#080808;">File</span><span class="t" style="left:30px;top:10px;font-size:25.6px;transform:translateY(0.26px) rotate(.2deg) scale(0.2267,0.25);color:#080808;">Edit</span><span class="t" style="left:47px;top:10px;font-size:25.6px;transform:translateY(0.25px) rotate(.2deg) scale(0.2272,0.25);color:#080808;">View</span><span class="t" style="left:67px;top:10px;font-size:25.6px;transform:translateY(0.25px) rotate(.2deg) scale(0.2187,0.25);color:#080808;">Insert</span><span class="t" style="left:88px;top:10px;font-size:25.6px;transform:translateY(0.25px) rotate(.2deg) scale(0.2249,0.25);color:#080808;">Select</span><span class="t" style="left:111px;top:10px;font-size:25.6px;transform:translateY(0.22px) rotate(.2deg) scale(0.2316,0.25);color:#080808;">Show-Hide</span><span class="t" style="left:147.5px;top:10px;font-size:25.6px;transform:translateY(0.25px) rotate(.2deg) scale(0.2152,0.25);color:#080808;">Query</span><span class="t" style="left:170px;top:10px;font-size:25.6px;transform:translateY(0.25px) rotate(.2deg) scale(0.2426,0.25);color:#080808;">Tools</span><span class="t" style="left:192px;top:10px;font-size:25.6px;transform:translateY(0.24px) rotate(.2deg) scale(0.2416,0.25);color:#080808;">Window</span><span class="t" style="left:221px;top:10px;font-size:25.6px;transform:translateY(0.25px) rotate(.2deg) scale(0.2279,0.25);color:#080808;">Help</span><span class="t" style="left:2.8px;top:49px;font-size:24.8px;transform:translateY(0.84px) rotate(.2deg) scale(0.2152,0.25);color:#222c46;">Entities</span><span class="t" style="left:9.4px;top:60px;font-size:24.8px;transform:translateY(0.84px) rotate(.2deg) scale(0.2130,0.25);color:#080808;">Parents</span><span class="t" style="left:33.4px;top:61px;font-size:24.8px;transform:translateY(0.74px) rotate(.2deg) scale(0.2057,0.25);color:#080808;">Children</span><span class="t" style="left:25.4px;top:70px;font-size:24.0px;transform:translateY(0.62px) rotate(.2deg) scale(0.2168,0.25);color:#080808;">Components</span><span class="t" style="left:25.4px;top:78px;font-size:24.0px;transform:translateY(0.63px) rotate(.2deg) scale(0.2207,0.25);color:#080808;">Surfaces</span><span class="t" style="left:25.4px;top:86px;font-size:24.0px;transform:translateY(0.64px) rotate(.2deg) scale(0.2184,0.25);color:#080808;">Curves</span><span class="t" style="left:25.4px;top:94px;font-size:24.0px;transform:translateY(0.64px) rotate(.2deg) scale(0.2189,0.25);color:#080808;">Points</span><span class="t" style="left:25.4px;top:102px;font-size:24.0px;transform:translateY(0.64px) rotate(.2deg) scale(0.2167,0.25);color:#080808;">Planes</span><span class="t" style="left:25.4px;top:110px;font-size:24.0px;transform:translateY(0.64px) rotate(.2deg) scale(0.2078,0.25);color:#080808;">Frames</span><span class="t" style="left:25.4px;top:118px;font-size:24.0px;transform:translateY(0.60px) rotate(.2deg) scale(0.2204,0.25);color:#080808;">Triangle Meshes</span><span class="t" style="left:25.4px;top:126px;font-size:24.0px;transform:translateY(0.62px) rotate(.2deg) scale(0.2168,0.25);color:#080808;">Wireframes</span><span class="t" style="left:25.4px;top:134px;font-size:24.0px;transform:translateY(0.63px) rotate(.2deg) scale(0.2157,0.25);color:#080808;">Contours</span><span class="t" style="left:25.4px;top:142px;font-size:24.0px;transform:translateY(0.64px) rotate(.2deg) scale(0.2142,0.25);color:#080808;">Solids</span><span class="t" style="left:25.4px;top:150px;font-size:24.0px;transform:translateY(0.59px) rotate(.2deg) scale(0.2175,0.25);color:#080808;">Composite Surfaces</span><span class="t" style="left:25.4px;top:158px;font-size:24.0px;transform:translateY(0.63px) rotate(.2deg) scale(0.2206,0.25);color:#080808;">Relabels</span><span class="t" style="left:25.4px;top:166px;font-size:24.0px;transform:translateY(0.64px) rotate(.2deg) scale(0.2147,0.25);color:#080808;">Graphs</span><span class="t" style="left:25.4px;top:174px;font-size:24.0px;transform:translateY(0.63px) rotate(.2deg) scale(0.2161,0.25);color:#080808;">Knotlists</span><span class="t" style="left:25.4px;top:182px;font-size:24.0px;transform:translateY(0.58px) rotate(.2deg) scale(0.2126,0.25);color:#080808;">Variables &amp; Formulas</span><span class="t" style="left:25.4px;top:190px;font-size:24.0px;transform:translateY(0.62px) rotate(.2deg) scale(0.2273,0.25);color:#080808;">Text Labels</span><span class="t" style="left:25.4px;top:198px;font-size:24.0px;transform:translateY(0.62px) rotate(.2deg) scale(0.2231,0.25);color:#080808;">Solve Sets</span><span class="t" style="left:25.4px;top:206px;font-size:24.0px;transform:translateY(0.63px) rotate(.2deg) scale(0.2146,0.25);color:#080808;">Entity Lists</span><span class="t" style="left:25.4px;top:214px;font-size:24.0px;transform:translateY(0.64px) rotate(.2deg) scale(0.2200,0.25);color:#080808;">System</span><span class="t" style="left:25.4px;top:222px;font-size:24.0px;transform:translateY(0.60px) rotate(.2deg) scale(0.2255,0.25);color:#080808;">No Dependents</span><span class="t" style="left:2.8px;top:252px;font-size:24.8px;transform:translateY(0.53px) rotate(.2deg) scale(0.2159,0.25);color:#222c46;">Properties</span><span class="t" style="left:96.3px;top:261px;font-size:25.6px;transform:translateY(0.47px) rotate(.2deg) scale(0.2250,0.25);color:#a89a00;font-weight:bold;text-shadow:.4px .3px 0 #333">?</span><span class="t" style="left:2.8px;top:438px;font-size:24.8px;transform:translateY(0.42px) rotate(.2deg) scale(0.2108,0.25);color:#222c46;">Selection Set</span><span class="t" style="left:66.8px;top:450px;font-size:24.0px;transform:translateY(0.03px) rotate(.2deg) scale(0.2198,0.25);color:#080808;">0 Entities</span><span class="t" style="left:9px;top:460px;font-size:24.0px;transform:translateY(0.74px) rotate(.2deg) scale(0.2250,0.25);color:#080808;">Name</span><span class="t" style="left:65.4px;top:460px;font-size:24.0px;transform:translateY(0.75px) rotate(.2deg) scale(0.2306,0.25);color:#080808;">Type</span><span class="t" style="left:507.3px;top:51px;font-size:25.2px;transform:translateY(0.21px) rotate(.2deg) scale(0.3050,0.25);color:#fff;font-weight:bold">Z</span><span class="t" style="left:690.3px;top:343px;font-size:25.2px;transform:translateY(0.81px) rotate(.2deg) scale(0.3250,0.25);color:#fff;font-weight:bold">Y</span><span class="t" style="left:2px;top:517px;font-size:24.0px;transform:translateY(0.29px) rotate(.2deg) scale(0.2308,0.25);color:#000;">For Help, press F1.</span><span class="t" style="left:282.8px;top:517px;font-size:23.2px;transform:translateY(0.46px) rotate(.2deg) scale(0.2047,0.25);color:#000;">L:0</span><span class="t" style="left:498.4px;top:517px;font-size:23.6px;transform:translateY(0.38px) rotate(.2deg) scale(0.2298,0.25);color:#000;">Lat 13.0</span><span class="t" style="left:542.6px;top:517px;font-size:23.6px;transform:translateY(0.37px) rotate(.2deg) scale(0.2382,0.25);color:#000;">Lon 155.0</span><span class="t" style="left:586.4px;top:517px;font-size:23.6px;transform:translateY(0.37px) rotate(.2deg) scale(0.2271,0.25);color:#000;">Radius 5.95</span><span class="t" style="left:650.6px;top:517px;font-size:23.6px;transform:translateY(0.39px) rotate(.2deg) scale(0.2345,0.25);color:#000;">Tilt 0.0</span></div>
</body></html>
